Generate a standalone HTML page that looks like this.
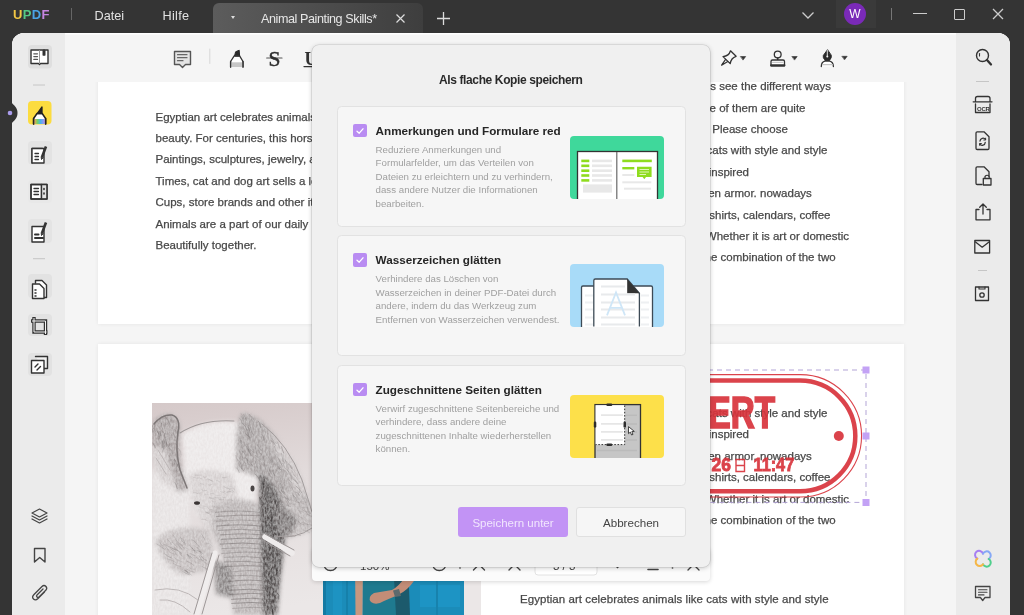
<!DOCTYPE html>
<html><head><meta charset="utf-8">
<style>
*{margin:0;padding:0;box-sizing:border-box}
html,body{width:1024px;height:615px;overflow:hidden;background:#343434;font-family:"Liberation Sans",sans-serif}
body{will-change:transform}
.a{position:absolute}
svg{position:absolute;overflow:visible}
#main{position:absolute;left:12px;top:33px;width:998px;height:582px;background:#f5f5f5;border-radius:12px 12px 0 0;overflow:hidden;box-shadow:inset 0 1.5px 0 #fff}
#lsb{position:absolute;left:0;top:0;width:53px;height:582px;background:#ebebeb}
#rsb{position:absolute;left:944px;top:0;width:54px;height:582px;background:#ebebeb}
#view{position:absolute;left:53px;top:49px;width:891px;height:533px;overflow:hidden}
.page{position:absolute;background:#fff;box-shadow:0 0 4px rgba(0,0,0,.07)}
.doc{position:absolute;font-size:11.5px;color:#484848;-webkit-text-stroke:.25px #484848;white-space:nowrap;line-height:14px}
.sbg{position:absolute;left:16px;width:24px;height:24px;border-radius:4px;background:#e0e0e0}
.sep{position:absolute;height:1px;background:#c8c8c8}
#dlg{position:absolute;left:312px;top:45px;width:398px;height:522px;background:#f0f0f0;border-radius:7px;box-shadow:0 0 0 .6px rgba(0,0,0,.12),0 1px 5px rgba(0,0,0,.22)}
.card{position:absolute;left:24.6px;width:349.8px;height:121px;background:#f6f6f6;border:1px solid #e2e2e2;border-radius:4.5px}
.cb{position:absolute;left:15px;width:14px;height:13.5px;background:#b98cf2;border-radius:2px}
.ct{position:absolute;left:38px;font-weight:bold;font-size:11.7px;line-height:14px;color:#262626;white-space:nowrap}
.cd{position:absolute;left:38px;font-size:9.7px;line-height:13.6px;color:#a0a0a0;white-space:nowrap}
.ill{position:absolute;left:232px;width:94px;height:63px;border-radius:4px;overflow:hidden}
</style></head><body>
<!-- ============ TITLE BAR ============ -->
<div class="a" style="left:13px;top:8px;font-size:13px;font-weight:bold;line-height:13px;letter-spacing:.3px">
<span style="color:#f2c744">U</span><span style="color:#55c785">P</span><span style="color:#4aa3e6">D</span><span style="color:#c584e0">F</span></div>
<div class="a" style="left:71px;top:8px;width:1px;height:12px;background:#666"></div>
<div class="a" style="left:94.5px;top:9px;font-size:12.7px;color:#e2e2e2;line-height:14px">Datei</div>
<div class="a" style="left:162.5px;top:9px;font-size:12.7px;color:#e2e2e2;line-height:14px;letter-spacing:.3px">Hilfe</div>
<div class="a" style="left:213px;top:3px;width:210px;height:30px;border-radius:6px 6px 0 0;background:linear-gradient(90deg,#5c5c5c,#3e3e3e)"></div>
<div class="a" style="left:231px;top:16px;width:0;height:0;border-left:2.5px solid transparent;border-right:2.5px solid transparent;border-top:3px solid #ddd"></div>
<div class="a" style="left:261px;top:12px;font-size:12.6px;color:#e6e6e6;line-height:14px;letter-spacing:-.42px">Animal Painting Skills*</div>
<svg style="left:396px;top:14px" width="9" height="9"><path d="M.5 .5L8.5 8.5M8.5 .5L.5 8.5" stroke="#ddd" stroke-width="1.2"/></svg>
<svg style="left:437px;top:12px" width="13" height="13"><path d="M6.5 0V13M0 6.5H13" stroke="#ddd" stroke-width="1.3"/></svg>
<!-- right controls -->
<svg style="left:802px;top:12px" width="12" height="7"><path d="M.5 .5L6 6L11.5 .5" fill="none" stroke="#ccc" stroke-width="1.3"/></svg>
<div class="a" style="left:836px;top:0;width:40px;height:28px;background:#3a3a3a"></div>
<div class="a" style="left:844px;top:3px;width:22px;height:22px;border-radius:50%;background:#7a2ab8;color:#fff;font-size:12px;line-height:22px;text-align:center">W</div>
<div class="a" style="left:891px;top:8px;width:1px;height:12px;background:#777"></div>
<div class="a" style="left:913px;top:13px;width:14px;height:1.3px;background:#ccc"></div>
<div class="a" style="left:954px;top:9px;width:11px;height:11px;border:1.3px solid #ccc;border-radius:1px"></div>
<svg style="left:993px;top:9px" width="10" height="10"><path d="M0 0L10 10M10 0L0 10" stroke="#ccc" stroke-width="1.3"/></svg>

<!-- ============ MAIN ============ -->
<div id="main">
  <div id="view">
    <!-- page 1 -->
    <div class="page" style="left:33px;top:-60px;width:806px;height:302px"></div>
    <!-- page 2 -->
    <div class="page" style="left:33px;top:262px;width:806px;height:400px"></div>
  </div>
  <div id="lsb"></div>
  <div id="rsb"></div>
</div>

<!-- ============ DOC LAYER ============ -->
<div id="docl" class="a" style="left:0;top:0;width:1024px;height:615px;clip-path:inset(82px 120px 0 65px)">
<div class="doc" style="left:155.5px;top:109.6px">Egyptian art celebrates animals like cats</div>
<div class="doc" style="left:155.5px;top:131.0px">beauty. For centuries, this horse and</div>
<div class="doc" style="left:155.5px;top:152.4px">Paintings, sculptures, jewelry, and more</div>
<div class="doc" style="left:155.5px;top:173.8px">Times, cat and dog art sells a lot of</div>
<div class="doc" style="left:155.5px;top:195.2px">Cups, store brands and other items</div>
<div class="doc" style="left:155.5px;top:216.6px">Animals are a part of our daily lives</div>
<div class="doc" style="left:155.5px;top:238.0px">Beautifully together.</div>
<div class="doc" style="left:430.9px;top:79.2px;width:400px;text-align:right">Let us see the different ways</div>
<div class="doc" style="left:405.5px;top:100.6px;width:400px;text-align:right">Some of them are quite</div>
<div class="doc" style="left:387.8px;top:122.0px;width:400px;text-align:right">animals. Please choose</div>
<div class="doc" style="left:427.4px;top:143.4px;width:400px;text-align:right">like cats with style and style</div>
<div class="doc" style="left:349.0px;top:164.8px;width:400px;text-align:right">inspired</div>
<div class="doc" style="left:411.8px;top:186.2px;width:400px;text-align:right">golden armor. nowadays</div>
<div class="doc" style="left:430.5px;top:207.6px;width:400px;text-align:right">t-shirts, calendars, coffee</div>
<div class="doc" style="left:449.0px;top:229.0px;width:400px;text-align:right">Whether it is art or domestic</div>
<div class="doc" style="left:435.6px;top:250.4px;width:400px;text-align:right">the combination of the two</div>
<div class="doc" style="left:427.4px;top:406.0px;width:400px;text-align:right">like cats with style and style</div>
<div class="doc" style="left:349.0px;top:427.4px;width:400px;text-align:right">inspired</div>
<div class="doc" style="left:411.8px;top:448.8px;width:400px;text-align:right">golden armor. nowadays</div>
<div class="doc" style="left:430.5px;top:470.2px;width:400px;text-align:right">t-shirts, calendars, coffee</div>
<div class="doc" style="left:449.0px;top:491.6px;width:400px;text-align:right">Whether it is art or domestic</div>
<div class="doc" style="left:435.6px;top:513.0px;width:400px;text-align:right">the combination of the two</div>
<div class="doc" style="left:520.0px;top:591.8px;letter-spacing:.06px">Egyptian art celebrates animals like cats with style and style</div>

<svg style="left:0;top:0" width="1024" height="615" viewBox="0 0 1024 615">
 <defs>
  <linearGradient id="elbg" x1="0" y1="0" x2="0.2" y2="1"><stop offset="0" stop-color="#d5c9c9"/><stop offset=".4" stop-color="#e2dbdb"/><stop offset="1" stop-color="#ebe7e7"/></linearGradient>
  <filter id="bl1" x="-20%" y="-20%" width="140%" height="140%"><feGaussianBlur stdDeviation="1.6"/></filter>
  <filter id="bl2" x="-20%" y="-20%" width="140%" height="140%"><feGaussianBlur stdDeviation="3"/></filter>
  <filter id="bl05"><feGaussianBlur stdDeviation=".6"/></filter>
  <filter id="tex" filterUnits="userSpaceOnUse" x="152" y="403" width="170" height="212"><feGaussianBlur in="SourceGraphic" stdDeviation="2.2" result="b"/><feTurbulence type="fractalNoise" baseFrequency="0.55 0.3" numOctaves="2" seed="7" result="n"/><feColorMatrix in="n" type="matrix" values="0 0 0 0 0  0 0 0 0 0  0 0 0 0 0  0 0 0 2.2 -0.6" result="m"/><feComposite in="b" in2="m" operator="arithmetic" k1="0" k2="1" k3="0" k4="0" result="b2"/><feFlood flood-color="#fff" result="w"/><feComposite in="w" in2="m" operator="in" result="wm"/><feComposite in="wm" in2="b" operator="in" result="wm2"/><feComponentTransfer in="wm2" result="wm3"><feFuncA type="linear" slope=".28"/></feComponentTransfer><feMerge><feMergeNode in="b"/><feMergeNode in="wm3"/></feMerge></filter>
  <clipPath id="elc"><rect x="152" y="403" width="329" height="212"/></clipPath>
  <clipPath id="phc"><rect x="323" y="560" width="141" height="55"/></clipPath>
 </defs>
 <!-- elephant picture -->
 <g clip-path="url(#elc)">
  <rect x="152" y="403" width="329" height="212" fill="url(#elbg)"/>
  <g filter="url(#tex)">
   <!-- lower-left light bg -->
   <path d="M152 470H190V615H152Z" fill="#e6e2e2"/>
   <!-- forehead -->
   <path d="M182 434Q205 419 236 422Q256 432 258 470L252 515L222 535L196 515L186 480Z" fill="#ebe7e7"/>
   <!-- ear curl -->
   <path d="M152 424Q158 414 170 414Q181 418 180 432Q178 450 182 470L188 490L178 492Q170 470 166 452Q160 446 152 446Z" fill="#aaa3a3"/>
   <path d="M152 446Q160 448 166 452Q170 470 176 490L160 480Q154 465 152 455Z" fill="#d3cdcd"/>
   <!-- hair tufts -->
   <path d="M236 446Q236 424 242 413Q252 414 260 420Q274 432 284 450Q294 468 300 492L296 505L280 508Q268 486 258 478Q246 472 236 470Z" fill="#aaa4a4"/>
   <path d="M265 432Q284 444 296 466Q308 490 312 512L300 512Q292 485 280 462Z" fill="#cbc5c5"/>
   <!-- face texture -->
   <path d="M188 474Q208 466 232 474Q242 496 236 524L208 532Q192 510 188 474Z" fill="#d6d0d0"/>
   <!-- right ear lower -->
   <path d="M274 492Q294 486 308 500Q314 516 312 530L288 538L272 526Z" fill="#bdb7b7"/>
   <!-- jaw fur -->
   <path d="M155 540Q175 522 208 530Q216 548 212 570L182 575Q162 566 155 540Z" fill="#c4bebe"/>
   <!-- trunk -->
   <path d="M212 505Q246 492 262 508L268 560L275 615H234L226 566L212 530Z" fill="#b9b3b3"/>
   <!-- dark strip -->
   <path d="M259 474Q272 478 282 502L285 540L280 580L277 615H263L261 560Z" fill="#555050"/>
   <path d="M272 500Q285 505 298 520L290 536L276 530Z" fill="#7a7575"/>
   <path d="M214 560L231 566L234 598L216 594Z" fill="#8a8585"/>
  </g>
  <g fill="none" stroke-linecap="round">
<path d="M264.2 463.0Q265.0 466.2 265.7 469.3" stroke="#6f6969" stroke-opacity="0.43" stroke-width="0.7"/>
<path d="M246.1 458.0Q246.6 462.8 249.5 465.3" stroke="#6f6969" stroke-opacity="0.35" stroke-width="0.7"/>
<path d="M276.4 469.9Q277.9 471.4 279.3 473.0" stroke="#6f6969" stroke-opacity="0.29" stroke-width="0.7"/>
<path d="M245.7 433.9Q248.0 436.2 250.6 438.1" stroke="#6f6969" stroke-opacity="0.50" stroke-width="0.7"/>
<path d="M267.4 470.6Q269.1 474.0 271.1 477.1" stroke="#6f6969" stroke-opacity="0.35" stroke-width="0.7"/>
<path d="M288.2 478.1Q289.1 480.9 291.4 482.4" stroke="#6f6969" stroke-opacity="0.29" stroke-width="0.7"/>
<path d="M295.3 491.8Q298.5 492.3 299.3 495.2" stroke="#6f6969" stroke-opacity="0.40" stroke-width="0.7"/>
<path d="M240.8 440.7Q240.4 445.7 242.4 448.5" stroke="#6f6969" stroke-opacity="0.34" stroke-width="0.7"/>
<path d="M241.7 416.3Q242.6 418.5 243.3 421.1" stroke="#6f6969" stroke-opacity="0.39" stroke-width="0.7"/>
<path d="M241.6 450.9Q244.9 451.6 245.3 455.0" stroke="#6f6969" stroke-opacity="0.49" stroke-width="0.7"/>
<path d="M248.5 446.9Q248.3 451.7 250.5 454.0" stroke="#6f6969" stroke-opacity="0.54" stroke-width="0.7"/>
<path d="M248.7 434.8Q249.0 438.1 250.6 440.3" stroke="#6f6969" stroke-opacity="0.29" stroke-width="0.7"/>
<path d="M239.5 465.6Q241.4 468.7 244.1 471.1" stroke="#6f6969" stroke-opacity="0.39" stroke-width="0.7"/>
<path d="M271.1 493.5Q274.0 494.1 274.5 497.1" stroke="#6f6969" stroke-opacity="0.49" stroke-width="0.7"/>
<path d="M250.4 426.9Q251.1 431.9 253.5 435.2" stroke="#6f6969" stroke-opacity="0.53" stroke-width="0.7"/>
<path d="M271.5 438.0Q272.9 442.2 276.8 443.7" stroke="#6f6969" stroke-opacity="0.33" stroke-width="0.7"/>
<path d="M270.6 491.5Q273.1 492.7 273.0 496.5" stroke="#6f6969" stroke-opacity="0.33" stroke-width="0.7"/>
<path d="M246.2 445.9Q246.9 448.4 248.4 450.2" stroke="#6f6969" stroke-opacity="0.51" stroke-width="0.7"/>
<path d="M278.7 467.0Q278.8 470.0 281.8 470.1" stroke="#6f6969" stroke-opacity="0.52" stroke-width="0.7"/>
<path d="M278.1 502.1Q280.8 504.5 283.6 506.9" stroke="#6f6969" stroke-opacity="0.47" stroke-width="0.7"/>
<path d="M239.3 460.8Q241.5 464.2 242.3 468.9" stroke="#6f6969" stroke-opacity="0.46" stroke-width="0.7"/>
<path d="M284.6 496.9Q288.0 498.7 289.0 503.0" stroke="#6f6969" stroke-opacity="0.51" stroke-width="0.7"/>
<path d="M274.4 446.1Q274.7 450.6 277.6 452.5" stroke="#6f6969" stroke-opacity="0.44" stroke-width="0.7"/>
<path d="M281.4 446.6Q282.4 450.1 283.8 453.2" stroke="#6f6969" stroke-opacity="0.50" stroke-width="0.7"/>
<path d="M236.5 467.8Q238.5 469.5 239.3 472.4" stroke="#6f6969" stroke-opacity="0.40" stroke-width="0.7"/>
<path d="M274.0 498.8Q274.7 501.0 276.7 502.1" stroke="#6f6969" stroke-opacity="0.45" stroke-width="0.7"/>
<path d="M248.1 425.5Q248.8 429.3 249.8 432.7" stroke="#6f6969" stroke-opacity="0.51" stroke-width="0.7"/>
<path d="M254.8 473.9Q257.8 475.3 259.0 478.6" stroke="#6f6969" stroke-opacity="0.52" stroke-width="0.7"/>
<path d="M271.0 440.7Q274.3 442.1 275.6 445.4" stroke="#6f6969" stroke-opacity="0.50" stroke-width="0.7"/>
<path d="M279.9 501.3Q281.4 503.4 283.1 505.2" stroke="#6f6969" stroke-opacity="0.34" stroke-width="0.7"/>
<path d="M248.3 449.3Q249.1 452.9 251.1 455.3" stroke="#6f6969" stroke-opacity="0.50" stroke-width="0.7"/>
<path d="M278.9 464.0Q279.9 468.6 283.8 470.4" stroke="#6f6969" stroke-opacity="0.31" stroke-width="0.7"/>
<path d="M243.7 414.6Q245.4 417.1 246.4 420.4" stroke="#6f6969" stroke-opacity="0.45" stroke-width="0.7"/>
<path d="M286.7 501.7Q287.6 504.1 288.7 506.4" stroke="#6f6969" stroke-opacity="0.32" stroke-width="0.7"/>
<path d="M235.8 455.5Q236.0 458.5 237.6 460.2" stroke="#6f6969" stroke-opacity="0.36" stroke-width="0.7"/>
<path d="M278.9 458.9Q280.3 462.8 282.3 466.0" stroke="#6f6969" stroke-opacity="0.48" stroke-width="0.7"/>
<path d="M293.4 479.3Q296.1 481.2 297.9 483.9" stroke="#6f6969" stroke-opacity="0.52" stroke-width="0.7"/>
<path d="M259.1 463.1Q261.4 465.7 261.2 471.0" stroke="#6f6969" stroke-opacity="0.40" stroke-width="0.7"/>
<path d="M280.6 487.2Q281.3 491.6 283.8 494.3" stroke="#6f6969" stroke-opacity="0.51" stroke-width="0.7"/>
<path d="M267.7 484.7Q271.4 487.1 273.0 491.6" stroke="#6f6969" stroke-opacity="0.36" stroke-width="0.7"/>
<path d="M239.4 451.4Q241.3 454.9 243.2 458.4" stroke="#6f6969" stroke-opacity="0.28" stroke-width="0.7"/>
<path d="M243.1 423.7Q246.0 426.1 246.9 430.5" stroke="#6f6969" stroke-opacity="0.46" stroke-width="0.7"/>
<path d="M247.8 460.0Q250.6 462.6 252.6 466.1" stroke="#6f6969" stroke-opacity="0.41" stroke-width="0.7"/>
<path d="M288.1 463.8Q291.0 465.2 291.8 468.6" stroke="#6f6969" stroke-opacity="0.51" stroke-width="0.7"/>
<path d="M269.4 458.8Q271.7 459.4 271.2 462.8" stroke="#6f6969" stroke-opacity="0.41" stroke-width="0.7"/>
<path d="M271.2 457.6Q272.1 459.5 272.9 461.7" stroke="#6f6969" stroke-opacity="0.38" stroke-width="0.7"/>
<path d="M295.2 498.2Q296.1 501.8 299.3 503.2" stroke="#6f6969" stroke-opacity="0.39" stroke-width="0.7"/>
<path d="M286.7 496.1Q287.3 499.5 289.7 501.0" stroke="#6f6969" stroke-opacity="0.44" stroke-width="0.7"/>
<path d="M247.3 431.9Q248.0 435.0 249.5 437.3" stroke="#6f6969" stroke-opacity="0.44" stroke-width="0.7"/>
<path d="M242.2 459.5Q243.9 461.4 245.5 463.5" stroke="#6f6969" stroke-opacity="0.39" stroke-width="0.7"/>
<path d="M258.8 450.1Q259.2 453.2 261.2 454.5" stroke="#6f6969" stroke-opacity="0.44" stroke-width="0.7"/>
<path d="M275.9 459.9Q277.9 462.2 277.9 466.8" stroke="#6f6969" stroke-opacity="0.33" stroke-width="0.7"/>
<path d="M282.7 487.2Q282.9 490.6 284.1 492.8" stroke="#6f6969" stroke-opacity="0.52" stroke-width="0.7"/>
<path d="M251.7 419.2Q253.5 421.3 253.5 425.2" stroke="#6f6969" stroke-opacity="0.30" stroke-width="0.7"/>
<path d="M259.8 476.4Q262.3 477.5 263.7 479.8" stroke="#6f6969" stroke-opacity="0.52" stroke-width="0.7"/>
<path d="M266.5 481.7Q267.4 486.0 270.2 488.3" stroke="#6f6969" stroke-opacity="0.29" stroke-width="0.7"/>
<path d="M241.2 413.6Q243.0 416.4 244.4 419.5" stroke="#6f6969" stroke-opacity="0.31" stroke-width="0.7"/>
<path d="M246.5 428.0Q249.1 431.1 249.1 436.7" stroke="#6f6969" stroke-opacity="0.30" stroke-width="0.7"/>
<path d="M263.6 483.1Q265.6 485.6 267.5 488.2" stroke="#6f6969" stroke-opacity="0.39" stroke-width="0.7"/>
<path d="M278.7 490.8Q281.6 492.5 283.0 495.6" stroke="#6f6969" stroke-opacity="0.38" stroke-width="0.7"/>
<path d="M247.4 426.8Q249.7 427.5 249.5 430.5" stroke="#6f6969" stroke-opacity="0.49" stroke-width="0.7"/>
<path d="M279.8 492.0Q281.4 494.5 282.4 497.6" stroke="#6f6969" stroke-opacity="0.41" stroke-width="0.7"/>
<path d="M296.1 486.1Q299.6 488.7 301.7 492.8" stroke="#6f6969" stroke-opacity="0.48" stroke-width="0.7"/>
<path d="M291.9 492.9Q294.2 495.8 294.9 500.3" stroke="#6f6969" stroke-opacity="0.38" stroke-width="0.7"/>
<path d="M255.6 455.6Q258.3 457.1 260.1 459.5" stroke="#6f6969" stroke-opacity="0.44" stroke-width="0.7"/>
<path d="M277.2 441.9Q278.7 445.0 280.0 448.3" stroke="#6f6969" stroke-opacity="0.38" stroke-width="0.7"/>
<path d="M280.5 483.2Q281.2 485.0 281.3 487.5" stroke="#6f6969" stroke-opacity="0.47" stroke-width="0.7"/>
<path d="M250.5 449.4Q252.1 451.5 254.3 452.9" stroke="#6f6969" stroke-opacity="0.30" stroke-width="0.7"/>
<path d="M270.5 457.8Q272.7 459.8 271.9 464.7" stroke="#6f6969" stroke-opacity="0.44" stroke-width="0.7"/>
<path d="M271.0 482.2Q273.2 486.1 277.5 488.0" stroke="#6f6969" stroke-opacity="0.40" stroke-width="0.7"/>
<path d="M245.9 458.1Q248.2 458.7 247.8 462.1" stroke="#6f6969" stroke-opacity="0.38" stroke-width="0.7"/>
<path d="M268.1 467.5Q270.2 469.3 271.3 472.1" stroke="#6f6969" stroke-opacity="0.42" stroke-width="0.7"/>
<path d="M249.0 414.2Q251.4 417.4 254.4 419.9" stroke="#6f6969" stroke-opacity="0.51" stroke-width="0.7"/>
<path d="M263.0 455.7Q263.6 458.3 264.0 461.0" stroke="#6f6969" stroke-opacity="0.52" stroke-width="0.7"/>
<path d="M281.5 453.5Q282.6 457.2 283.0 461.5" stroke="#6f6969" stroke-opacity="0.30" stroke-width="0.7"/>
<path d="M274.5 454.6Q276.0 456.2 277.4 457.9" stroke="#6f6969" stroke-opacity="0.30" stroke-width="0.7"/>
<path d="M262.9 474.1Q264.6 476.2 265.8 478.8" stroke="#6f6969" stroke-opacity="0.38" stroke-width="0.7"/>
<path d="M285.0 459.1Q286.5 462.7 286.6 467.8" stroke="#6f6969" stroke-opacity="0.33" stroke-width="0.7"/>
<path d="M284.6 470.1Q286.8 471.8 287.8 474.6" stroke="#6f6969" stroke-opacity="0.42" stroke-width="0.7"/>
<path d="M273.0 470.7Q273.1 473.9 274.7 475.6" stroke="#6f6969" stroke-opacity="0.53" stroke-width="0.7"/>
<path d="M292.9 495.0Q293.9 497.2 296.3 498.0" stroke="#6f6969" stroke-opacity="0.38" stroke-width="0.7"/>
<path d="M269.4 470.3Q270.4 473.8 273.1 475.6" stroke="#6f6969" stroke-opacity="0.36" stroke-width="0.7"/>
<path d="M281.9 491.0Q284.6 491.7 285.4 494.3" stroke="#6f6969" stroke-opacity="0.44" stroke-width="0.7"/>
<path d="M262.3 434.7Q263.6 437.1 264.1 440.4" stroke="#6f6969" stroke-opacity="0.54" stroke-width="0.7"/>
<path d="M255.3 461.0Q256.6 465.3 258.3 469.2" stroke="#6f6969" stroke-opacity="0.37" stroke-width="0.7"/>
<path d="M239.5 418.0Q241.6 420.3 242.5 423.8" stroke="#6f6969" stroke-opacity="0.35" stroke-width="0.7"/>
<path d="M239.9 438.3Q240.6 442.5 242.6 445.4" stroke="#6f6969" stroke-opacity="0.31" stroke-width="0.7"/>
<path d="M258.2 420.9Q260.7 422.9 260.7 427.4" stroke="#6f6969" stroke-opacity="0.52" stroke-width="0.7"/>
<path d="M255.4 446.8Q255.6 451.7 257.3 455.1" stroke="#6f6969" stroke-opacity="0.37" stroke-width="0.7"/>
<path d="M257.7 445.0Q258.5 448.4 261.1 450.0" stroke="#6f6969" stroke-opacity="0.42" stroke-width="0.7"/>
<path d="M290.1 472.7Q291.5 476.5 291.1 482.1" stroke="#8a8484" stroke-opacity="0.26" stroke-width="0.6"/>
<path d="M267.5 433.2Q267.7 439.8 270.4 443.9" stroke="#8a8484" stroke-opacity="0.39" stroke-width="0.6"/>
<path d="M283.0 454.2Q283.5 459.0 284.1 463.8" stroke="#8a8484" stroke-opacity="0.37" stroke-width="0.6"/>
<path d="M298.3 484.7Q299.9 487.7 299.5 492.6" stroke="#8a8484" stroke-opacity="0.40" stroke-width="0.6"/>
<path d="M304.0 491.1Q306.5 495.1 306.2 501.9" stroke="#8a8484" stroke-opacity="0.39" stroke-width="0.6"/>
<path d="M298.2 508.5Q299.0 512.2 301.5 514.1" stroke="#8a8484" stroke-opacity="0.34" stroke-width="0.6"/>
<path d="M286.5 468.4Q290.3 472.8 293.1 478.1" stroke="#8a8484" stroke-opacity="0.30" stroke-width="0.6"/>
<path d="M296.5 478.0Q298.0 481.0 300.5 483.0" stroke="#8a8484" stroke-opacity="0.30" stroke-width="0.6"/>
<path d="M302.4 495.1Q305.4 497.1 307.1 500.4" stroke="#8a8484" stroke-opacity="0.26" stroke-width="0.6"/>
<path d="M287.0 465.0Q288.6 468.4 288.1 474.0" stroke="#8a8484" stroke-opacity="0.31" stroke-width="0.6"/>
<path d="M287.2 469.9Q290.0 474.6 293.9 478.2" stroke="#8a8484" stroke-opacity="0.31" stroke-width="0.6"/>
<path d="M287.4 464.5Q292.4 467.7 295.6 472.8" stroke="#8a8484" stroke-opacity="0.29" stroke-width="0.6"/>
<path d="M276.7 454.8Q278.3 459.7 281.4 463.2" stroke="#8a8484" stroke-opacity="0.29" stroke-width="0.6"/>
<path d="M270.1 434.9Q270.7 440.5 273.1 444.2" stroke="#8a8484" stroke-opacity="0.34" stroke-width="0.6"/>
<path d="M271.0 439.4Q273.6 440.7 273.8 444.5" stroke="#8a8484" stroke-opacity="0.34" stroke-width="0.6"/>
<path d="M287.7 478.7Q288.7 484.1 290.4 488.9" stroke="#8a8484" stroke-opacity="0.32" stroke-width="0.6"/>
<path d="M293.4 478.0Q295.6 481.2 298.6 483.4" stroke="#8a8484" stroke-opacity="0.40" stroke-width="0.6"/>
<path d="M295.2 494.3Q299.0 498.5 302.0 503.4" stroke="#8a8484" stroke-opacity="0.29" stroke-width="0.6"/>
<path d="M289.1 483.0Q291.7 488.2 295.1 492.5" stroke="#8a8484" stroke-opacity="0.35" stroke-width="0.6"/>
<path d="M289.2 473.6Q291.8 475.6 291.9 480.1" stroke="#8a8484" stroke-opacity="0.48" stroke-width="0.6"/>
<path d="M294.3 487.1Q297.5 490.1 298.8 495.0" stroke="#8a8484" stroke-opacity="0.24" stroke-width="0.6"/>
<path d="M285.4 460.3Q287.9 464.1 288.8 469.5" stroke="#8a8484" stroke-opacity="0.42" stroke-width="0.6"/>
<path d="M302.4 496.8Q304.6 500.2 306.3 504.0" stroke="#8a8484" stroke-opacity="0.46" stroke-width="0.6"/>
<path d="M287.1 469.1Q289.2 474.5 292.3 478.9" stroke="#8a8484" stroke-opacity="0.25" stroke-width="0.6"/>
<path d="M297.9 499.6Q299.9 503.3 300.3 508.4" stroke="#8a8484" stroke-opacity="0.31" stroke-width="0.6"/>
<path d="M285.3 460.2Q288.7 463.7 292.0 467.3" stroke="#8a8484" stroke-opacity="0.30" stroke-width="0.6"/>
<path d="M306.1 504.2Q307.6 509.6 309.5 514.5" stroke="#8a8484" stroke-opacity="0.43" stroke-width="0.6"/>
<path d="M282.6 457.9Q282.3 461.9 284.7 463.2" stroke="#8a8484" stroke-opacity="0.46" stroke-width="0.6"/>
<path d="M307.4 507.2Q308.3 510.8 310.4 513.2" stroke="#8a8484" stroke-opacity="0.46" stroke-width="0.6"/>
<path d="M303.5 507.9Q305.4 512.6 309.2 515.4" stroke="#8a8484" stroke-opacity="0.45" stroke-width="0.6"/>
<path d="M306.4 498.6Q307.9 501.0 308.2 504.6" stroke="#8a8484" stroke-opacity="0.47" stroke-width="0.6"/>
<path d="M293.8 491.1Q297.4 494.1 298.6 499.4" stroke="#8a8484" stroke-opacity="0.38" stroke-width="0.6"/>
<path d="M284.6 471.7Q286.0 474.0 286.8 476.9" stroke="#8a8484" stroke-opacity="0.31" stroke-width="0.6"/>
<path d="M288.7 479.5Q292.0 482.7 293.6 487.7" stroke="#8a8484" stroke-opacity="0.36" stroke-width="0.6"/>
<path d="M296.8 470.4Q298.0 472.8 297.6 476.9" stroke="#8a8484" stroke-opacity="0.28" stroke-width="0.6"/>
<path d="M299.5 491.8Q301.1 496.1 304.4 498.7" stroke="#8a8484" stroke-opacity="0.38" stroke-width="0.6"/>
<path d="M291.0 484.1Q292.1 490.1 295.1 494.2" stroke="#8a8484" stroke-opacity="0.28" stroke-width="0.6"/>
<path d="M282.5 463.0Q284.1 468.6 288.4 471.6" stroke="#8a8484" stroke-opacity="0.46" stroke-width="0.6"/>
<path d="M290.9 472.1Q290.7 476.5 292.5 478.8" stroke="#8a8484" stroke-opacity="0.31" stroke-width="0.6"/>
<path d="M291.6 470.3Q293.0 475.3 296.8 477.8" stroke="#8a8484" stroke-opacity="0.44" stroke-width="0.6"/>
<path d="M156.9 430.9Q159.2 432.9 159.5 436.9" stroke="#6f6969" stroke-opacity="0.48" stroke-width="0.7"/>
<path d="M153.6 443.9Q155.6 444.6 154.8 448.2" stroke="#6f6969" stroke-opacity="0.28" stroke-width="0.7"/>
<path d="M153.6 430.7Q153.1 433.1 153.2 434.9" stroke="#6f6969" stroke-opacity="0.35" stroke-width="0.7"/>
<path d="M165.4 416.5Q168.1 419.2 169.1 423.4" stroke="#6f6969" stroke-opacity="0.47" stroke-width="0.7"/>
<path d="M160.0 431.5Q160.2 433.9 160.6 436.0" stroke="#6f6969" stroke-opacity="0.52" stroke-width="0.7"/>
<path d="M165.6 437.2Q163.7 441.7 164.6 443.3" stroke="#6f6969" stroke-opacity="0.38" stroke-width="0.7"/>
<path d="M158.6 438.4Q158.7 442.1 160.9 443.8" stroke="#6f6969" stroke-opacity="0.32" stroke-width="0.7"/>
<path d="M163.7 445.7Q164.2 447.8 162.6 452.1" stroke="#6f6969" stroke-opacity="0.33" stroke-width="0.7"/>
<path d="M165.7 417.1Q165.1 420.4 165.9 422.2" stroke="#6f6969" stroke-opacity="0.28" stroke-width="0.7"/>
<path d="M157.6 430.8Q159.2 433.8 159.5 438.1" stroke="#6f6969" stroke-opacity="0.34" stroke-width="0.7"/>
<path d="M165.3 423.4Q165.8 425.2 164.7 428.5" stroke="#6f6969" stroke-opacity="0.47" stroke-width="0.7"/>
<path d="M162.0 440.7Q163.1 444.5 165.2 447.2" stroke="#6f6969" stroke-opacity="0.48" stroke-width="0.7"/>
<path d="M170.1 416.1Q169.3 419.7 171.3 420.5" stroke="#6f6969" stroke-opacity="0.31" stroke-width="0.7"/>
<path d="M162.9 445.0Q163.9 446.5 163.5 449.1" stroke="#6f6969" stroke-opacity="0.34" stroke-width="0.7"/>
<path d="M177.2 463.9Q177.5 466.6 179.0 468.0" stroke="#6f6969" stroke-opacity="0.46" stroke-width="0.7"/>
<path d="M166.8 441.9Q166.0 444.8 166.4 446.4" stroke="#6f6969" stroke-opacity="0.36" stroke-width="0.7"/>
<path d="M175.0 482.7Q176.6 485.2 177.3 488.7" stroke="#6f6969" stroke-opacity="0.53" stroke-width="0.7"/>
<path d="M166.2 442.3Q166.9 445.1 168.6 446.9" stroke="#6f6969" stroke-opacity="0.40" stroke-width="0.7"/>
<path d="M161.4 423.7Q161.1 427.4 162.7 429.1" stroke="#6f6969" stroke-opacity="0.45" stroke-width="0.7"/>
<path d="M159.9 418.7Q159.6 422.3 161.4 423.8" stroke="#6f6969" stroke-opacity="0.43" stroke-width="0.7"/>
<path d="M177.2 455.3Q176.9 457.5 177.3 459.0" stroke="#6f6969" stroke-opacity="0.37" stroke-width="0.7"/>
<path d="M152.9 443.0Q154.5 445.3 155.6 448.1" stroke="#6f6969" stroke-opacity="0.40" stroke-width="0.7"/>
<path d="M162.5 431.6Q164.9 432.6 164.9 436.0" stroke="#6f6969" stroke-opacity="0.42" stroke-width="0.7"/>
<path d="M174.0 459.8Q173.9 463.1 175.2 465.0" stroke="#6f6969" stroke-opacity="0.49" stroke-width="0.7"/>
<path d="M163.4 440.0Q162.2 443.0 162.8 444.2" stroke="#6f6969" stroke-opacity="0.33" stroke-width="0.7"/>
<path d="M175.0 429.7Q176.2 432.6 178.0 434.8" stroke="#6f6969" stroke-opacity="0.33" stroke-width="0.7"/>
<path d="M171.3 459.2Q173.1 461.3 172.2 466.2" stroke="#6f6969" stroke-opacity="0.36" stroke-width="0.7"/>
<path d="M177.6 464.1Q176.0 468.6 176.5 471.0" stroke="#6f6969" stroke-opacity="0.44" stroke-width="0.7"/>
<path d="M169.0 455.7Q170.4 457.2 170.3 460.3" stroke="#6f6969" stroke-opacity="0.41" stroke-width="0.7"/>
<path d="M159.9 431.4Q160.6 433.4 161.2 435.5" stroke="#6f6969" stroke-opacity="0.30" stroke-width="0.7"/>
<path d="M178.4 448.2Q180.9 450.4 181.2 454.8" stroke="#6f6969" stroke-opacity="0.28" stroke-width="0.7"/>
<path d="M177.7 431.2Q177.3 434.1 177.8 436.1" stroke="#6f6969" stroke-opacity="0.48" stroke-width="0.7"/>
<path d="M182.0 476.0Q183.0 478.0 182.7 481.3" stroke="#6f6969" stroke-opacity="0.44" stroke-width="0.7"/>
<path d="M180.8 474.1Q182.4 476.0 183.0 478.8" stroke="#6f6969" stroke-opacity="0.33" stroke-width="0.7"/>
<path d="M176.5 444.1Q178.1 445.4 177.0 449.3" stroke="#6f6969" stroke-opacity="0.54" stroke-width="0.7"/>
<path d="M170.9 449.3Q172.4 450.8 172.2 454.0" stroke="#6f6969" stroke-opacity="0.50" stroke-width="0.7"/>
<path d="M161.9 441.2Q163.7 443.1 162.5 447.9" stroke="#6f6969" stroke-opacity="0.38" stroke-width="0.7"/>
<path d="M177.1 454.5Q176.0 457.6 176.9 458.7" stroke="#6f6969" stroke-opacity="0.30" stroke-width="0.7"/>
<path d="M169.0 421.6Q169.8 423.2 170.1 425.1" stroke="#6f6969" stroke-opacity="0.31" stroke-width="0.7"/>
<path d="M173.5 432.7Q174.1 435.8 175.5 438.0" stroke="#6f6969" stroke-opacity="0.34" stroke-width="0.7"/>
<path d="M154.1 424.4Q153.9 429.1 155.5 432.1" stroke="#6f6969" stroke-opacity="0.50" stroke-width="0.7"/>
<path d="M169.5 443.7Q168.1 447.7 169.3 449.0" stroke="#6f6969" stroke-opacity="0.42" stroke-width="0.7"/>
<path d="M174.4 459.0Q176.7 461.5 176.9 466.2" stroke="#6f6969" stroke-opacity="0.54" stroke-width="0.7"/>
<path d="M152.1 425.4Q152.5 427.6 153.8 428.9" stroke="#6f6969" stroke-opacity="0.47" stroke-width="0.7"/>
<path d="M152.6 428.6Q152.5 430.3 152.1 432.2" stroke="#6f6969" stroke-opacity="0.49" stroke-width="0.7"/>
<path d="M179.7 468.0Q181.5 470.4 181.4 474.7" stroke="#6f6969" stroke-opacity="0.48" stroke-width="0.7"/>
<path d="M177.6 431.7Q177.6 433.3 177.2 435.4" stroke="#6f6969" stroke-opacity="0.33" stroke-width="0.7"/>
<path d="M165.8 439.3Q165.6 443.2 166.2 446.3" stroke="#6f6969" stroke-opacity="0.44" stroke-width="0.7"/>
<path d="M165.0 433.3Q163.5 437.0 164.5 438.2" stroke="#6f6969" stroke-opacity="0.36" stroke-width="0.7"/>
<path d="M178.7 427.5Q179.2 429.9 178.7 433.4" stroke="#6f6969" stroke-opacity="0.32" stroke-width="0.7"/>
<path d="M171.8 548.2Q174.7 549.7 178.1 550.5" stroke="#7d7777" stroke-opacity="0.32" stroke-width="0.7"/>
<path d="M181.9 570.8Q185.1 573.4 189.4 574.9" stroke="#7d7777" stroke-opacity="0.42" stroke-width="0.7"/>
<path d="M165.8 546.5Q166.8 549.0 169.2 550.3" stroke="#7d7777" stroke-opacity="0.40" stroke-width="0.7"/>
<path d="M206.4 543.1Q210.5 543.0 211.7 545.9" stroke="#7d7777" stroke-opacity="0.28" stroke-width="0.7"/>
<path d="M189.4 545.1Q191.5 546.7 193.0 548.9" stroke="#7d7777" stroke-opacity="0.45" stroke-width="0.7"/>
<path d="M201.1 556.0Q202.7 559.4 206.5 560.5" stroke="#7d7777" stroke-opacity="0.44" stroke-width="0.7"/>
<path d="M192.2 548.1Q194.0 550.7 196.5 552.7" stroke="#7d7777" stroke-opacity="0.30" stroke-width="0.7"/>
<path d="M187.6 554.4Q189.6 555.4 190.9 557.2" stroke="#7d7777" stroke-opacity="0.35" stroke-width="0.7"/>
<path d="M187.5 554.7Q188.7 556.8 190.2 558.8" stroke="#7d7777" stroke-opacity="0.48" stroke-width="0.7"/>
<path d="M194.1 540.6Q196.8 544.4 200.0 547.5" stroke="#7d7777" stroke-opacity="0.45" stroke-width="0.7"/>
<path d="M180.8 537.6Q184.3 539.2 185.2 543.5" stroke="#7d7777" stroke-opacity="0.44" stroke-width="0.7"/>
<path d="M199.3 551.1Q201.6 551.9 201.6 555.0" stroke="#7d7777" stroke-opacity="0.41" stroke-width="0.7"/>
<path d="M179.4 552.0Q180.2 554.8 182.4 556.2" stroke="#7d7777" stroke-opacity="0.39" stroke-width="0.7"/>
<path d="M196.3 550.1Q200.9 551.0 203.4 554.1" stroke="#7d7777" stroke-opacity="0.42" stroke-width="0.7"/>
<path d="M184.8 568.8Q185.9 571.2 187.8 572.7" stroke="#7d7777" stroke-opacity="0.26" stroke-width="0.7"/>
<path d="M202.0 566.5Q204.0 567.9 206.6 568.6" stroke="#7d7777" stroke-opacity="0.44" stroke-width="0.7"/>
<path d="M186.0 568.8Q189.3 571.5 194.3 572.3" stroke="#7d7777" stroke-opacity="0.39" stroke-width="0.7"/>
<path d="M201.7 561.0Q204.8 563.0 208.3 564.5" stroke="#7d7777" stroke-opacity="0.24" stroke-width="0.7"/>
<path d="M172.4 542.2Q174.7 543.9 176.3 546.2" stroke="#7d7777" stroke-opacity="0.41" stroke-width="0.7"/>
<path d="M192.4 550.0Q195.9 549.7 196.7 552.0" stroke="#7d7777" stroke-opacity="0.39" stroke-width="0.7"/>
<path d="M173.5 535.5Q176.1 538.1 177.3 542.1" stroke="#7d7777" stroke-opacity="0.33" stroke-width="0.7"/>
<path d="M169.4 546.8Q172.5 548.6 176.0 550.0" stroke="#7d7777" stroke-opacity="0.44" stroke-width="0.7"/>
<path d="M174.9 547.7Q177.9 551.0 181.7 553.4" stroke="#7d7777" stroke-opacity="0.41" stroke-width="0.7"/>
<path d="M164.8 553.9Q167.8 556.7 172.0 558.3" stroke="#7d7777" stroke-opacity="0.45" stroke-width="0.7"/>
<path d="M191.9 547.9Q194.3 549.7 195.2 553.0" stroke="#7d7777" stroke-opacity="0.38" stroke-width="0.7"/>
<path d="M175.4 539.9Q178.3 543.3 182.4 545.4" stroke="#7d7777" stroke-opacity="0.41" stroke-width="0.7"/>
<path d="M191.4 539.6Q194.5 539.8 195.3 542.5" stroke="#7d7777" stroke-opacity="0.30" stroke-width="0.7"/>
<path d="M176.4 542.0Q179.2 545.1 181.5 548.7" stroke="#7d7777" stroke-opacity="0.37" stroke-width="0.7"/>
<path d="M156.9 544.1Q160.5 545.9 163.2 548.6" stroke="#7d7777" stroke-opacity="0.32" stroke-width="0.7"/>
<path d="M179.5 544.5Q182.3 545.8 184.0 548.1" stroke="#7d7777" stroke-opacity="0.39" stroke-width="0.7"/>
<path d="M199.2 555.9Q200.9 560.5 205.3 562.6" stroke="#7d7777" stroke-opacity="0.35" stroke-width="0.7"/>
<path d="M173.9 557.3Q177.0 560.4 181.8 561.7" stroke="#7d7777" stroke-opacity="0.33" stroke-width="0.7"/>
<path d="M161.7 546.0Q162.1 548.8 164.6 549.5" stroke="#7d7777" stroke-opacity="0.40" stroke-width="0.7"/>
<path d="M187.0 561.3Q191.2 562.7 194.0 565.4" stroke="#7d7777" stroke-opacity="0.43" stroke-width="0.7"/>
<path d="M206.1 569.3Q208.9 570.2 211.6 571.4" stroke="#7d7777" stroke-opacity="0.37" stroke-width="0.7"/>
<path d="M169.0 551.4Q171.1 553.9 175.4 554.3" stroke="#7d7777" stroke-opacity="0.26" stroke-width="0.7"/>
<path d="M182.5 541.1Q183.9 543.5 185.9 545.3" stroke="#7d7777" stroke-opacity="0.25" stroke-width="0.7"/>
<path d="M165.0 548.2Q168.5 549.3 169.8 552.5" stroke="#7d7777" stroke-opacity="0.27" stroke-width="0.7"/>
<path d="M201.7 534.1Q203.2 537.2 205.2 539.9" stroke="#7d7777" stroke-opacity="0.39" stroke-width="0.7"/>
<path d="M193.8 560.6Q195.4 563.5 199.9 563.6" stroke="#7d7777" stroke-opacity="0.27" stroke-width="0.7"/>
<path d="M188.8 567.0Q190.4 569.4 194.5 569.3" stroke="#7d7777" stroke-opacity="0.30" stroke-width="0.7"/>
<path d="M170.8 548.9Q175.1 550.7 176.7 555.1" stroke="#7d7777" stroke-opacity="0.38" stroke-width="0.7"/>
<path d="M181.3 569.0Q184.3 570.0 185.9 572.3" stroke="#7d7777" stroke-opacity="0.30" stroke-width="0.7"/>
<path d="M173.7 547.4Q175.8 549.5 178.3 551.2" stroke="#7d7777" stroke-opacity="0.35" stroke-width="0.7"/>
<path d="M184.2 546.9Q185.8 548.4 188.3 549.1" stroke="#7d7777" stroke-opacity="0.32" stroke-width="0.7"/>
<path d="M180.5 537.8Q181.1 541.8 184.7 542.9" stroke="#7d7777" stroke-opacity="0.34" stroke-width="0.7"/>
<path d="M185.9 571.2Q188.4 573.6 191.8 575.3" stroke="#7d7777" stroke-opacity="0.31" stroke-width="0.7"/>
<path d="M186.9 554.7Q189.8 556.5 192.5 558.3" stroke="#7d7777" stroke-opacity="0.42" stroke-width="0.7"/>
<path d="M167.4 539.7Q170.4 541.1 171.3 544.6" stroke="#7d7777" stroke-opacity="0.34" stroke-width="0.7"/>
<path d="M167.1 558.8Q172.3 559.6 175.4 562.4" stroke="#7d7777" stroke-opacity="0.32" stroke-width="0.7"/>
<path d="M196.3 557.4Q198.6 560.3 203.6 560.4" stroke="#7d7777" stroke-opacity="0.39" stroke-width="0.7"/>
<path d="M185.0 570.2Q187.8 570.4 188.0 573.3" stroke="#7d7777" stroke-opacity="0.42" stroke-width="0.7"/>
<path d="M193.9 545.5Q198.3 547.6 200.1 552.1" stroke="#7d7777" stroke-opacity="0.26" stroke-width="0.7"/>
<path d="M197.6 547.5Q199.4 550.0 201.5 552.1" stroke="#7d7777" stroke-opacity="0.34" stroke-width="0.7"/>
<path d="M160.2 542.7Q160.6 545.5 163.2 546.1" stroke="#7d7777" stroke-opacity="0.44" stroke-width="0.7"/>
<path d="M190.8 553.7Q192.4 555.2 195.2 555.7" stroke="#7d7777" stroke-opacity="0.47" stroke-width="0.7"/>
<path d="M184.2 570.0Q187.0 571.4 189.7 573.0" stroke="#7d7777" stroke-opacity="0.44" stroke-width="0.7"/>
<path d="M176.6 543.8Q179.6 547.0 182.6 550.2" stroke="#7d7777" stroke-opacity="0.41" stroke-width="0.7"/>
<path d="M173.5 563.4Q176.1 566.0 180.7 566.6" stroke="#7d7777" stroke-opacity="0.38" stroke-width="0.7"/>
<path d="M163.9 544.3Q166.8 545.3 169.2 546.9" stroke="#7d7777" stroke-opacity="0.36" stroke-width="0.7"/>
<path d="M285.1 516.8Q287.8 518.2 290.0 520.1" stroke="#7d7777" stroke-opacity="0.36" stroke-width="0.6"/>
<path d="M296.1 502.0Q300.1 502.5 303.7 503.5" stroke="#7d7777" stroke-opacity="0.30" stroke-width="0.6"/>
<path d="M283.7 523.9Q287.3 524.8 290.6 526.0" stroke="#7d7777" stroke-opacity="0.47" stroke-width="0.6"/>
<path d="M305.9 512.1Q309.1 512.2 310.9 513.9" stroke="#7d7777" stroke-opacity="0.26" stroke-width="0.6"/>
<path d="M280.5 530.9Q284.5 530.8 288.1 531.1" stroke="#7d7777" stroke-opacity="0.37" stroke-width="0.6"/>
<path d="M282.2 496.5Q286.2 498.1 288.5 501.4" stroke="#7d7777" stroke-opacity="0.26" stroke-width="0.6"/>
<path d="M300.0 501.6Q303.7 501.7 306.7 502.5" stroke="#7d7777" stroke-opacity="0.27" stroke-width="0.6"/>
<path d="M299.1 516.2Q303.2 518.2 306.1 521.4" stroke="#7d7777" stroke-opacity="0.33" stroke-width="0.6"/>
<path d="M305.9 524.2Q310.7 524.4 314.2 525.9" stroke="#7d7777" stroke-opacity="0.30" stroke-width="0.6"/>
<path d="M290.8 503.1Q292.4 504.8 296.2 504.2" stroke="#7d7777" stroke-opacity="0.36" stroke-width="0.6"/>
<path d="M279.6 504.5Q284.0 504.0 286.2 505.8" stroke="#7d7777" stroke-opacity="0.28" stroke-width="0.6"/>
<path d="M303.3 529.9Q307.1 530.6 309.5 532.7" stroke="#7d7777" stroke-opacity="0.37" stroke-width="0.6"/>
<path d="M296.1 532.9Q297.1 535.6 300.7 535.7" stroke="#7d7777" stroke-opacity="0.46" stroke-width="0.6"/>
<path d="M283.3 527.7Q286.1 528.6 289.7 528.7" stroke="#7d7777" stroke-opacity="0.42" stroke-width="0.6"/>
<path d="M307.0 514.1Q308.9 516.1 312.5 516.4" stroke="#7d7777" stroke-opacity="0.47" stroke-width="0.6"/>
<path d="M292.4 495.7Q295.7 496.4 296.8 499.3" stroke="#7d7777" stroke-opacity="0.25" stroke-width="0.6"/>
<path d="M270.3 515.9Q274.3 517.2 276.1 520.7" stroke="#7d7777" stroke-opacity="0.43" stroke-width="0.6"/>
<path d="M290.3 499.4Q293.1 500.5 295.8 501.6" stroke="#7d7777" stroke-opacity="0.29" stroke-width="0.6"/>
<path d="M298.0 510.4Q300.2 511.2 302.4 512.0" stroke="#7d7777" stroke-opacity="0.37" stroke-width="0.6"/>
<path d="M273.7 504.9Q278.7 504.5 281.1 506.7" stroke="#7d7777" stroke-opacity="0.47" stroke-width="0.6"/>
<path d="M269.3 513.0Q273.1 514.2 276.3 516.0" stroke="#7d7777" stroke-opacity="0.39" stroke-width="0.6"/>
<path d="M290.4 536.1Q293.9 535.0 295.1 536.2" stroke="#7d7777" stroke-opacity="0.47" stroke-width="0.6"/>
<path d="M301.9 522.4Q306.0 522.9 308.5 524.9" stroke="#7d7777" stroke-opacity="0.43" stroke-width="0.6"/>
<path d="M302.5 510.1Q303.9 512.2 308.2 511.4" stroke="#7d7777" stroke-opacity="0.42" stroke-width="0.6"/>
<path d="M279.8 517.9Q283.0 518.4 285.2 520.0" stroke="#7d7777" stroke-opacity="0.35" stroke-width="0.6"/>
<path d="M278.9 532.3Q280.6 533.3 283.8 532.9" stroke="#7d7777" stroke-opacity="0.35" stroke-width="0.6"/>
<path d="M299.7 506.7Q302.6 508.0 307.0 507.9" stroke="#7d7777" stroke-opacity="0.37" stroke-width="0.6"/>
<path d="M279.6 532.0Q281.6 532.9 284.8 532.7" stroke="#7d7777" stroke-opacity="0.32" stroke-width="0.6"/>
<path d="M298.1 521.2Q299.8 524.3 304.0 524.8" stroke="#7d7777" stroke-opacity="0.42" stroke-width="0.6"/>
<path d="M277.4 500.7Q281.4 502.4 286.1 503.3" stroke="#7d7777" stroke-opacity="0.33" stroke-width="0.6"/>
<path d="M284.1 496.1Q287.0 498.7 290.9 500.3" stroke="#7d7777" stroke-opacity="0.43" stroke-width="0.6"/>
<path d="M283.6 503.6Q287.1 505.3 290.8 506.8" stroke="#7d7777" stroke-opacity="0.44" stroke-width="0.6"/>
<path d="M281.8 534.4Q287.0 533.5 289.5 535.2" stroke="#7d7777" stroke-opacity="0.29" stroke-width="0.6"/>
<path d="M274.3 521.0Q278.8 521.8 280.6 525.4" stroke="#7d7777" stroke-opacity="0.35" stroke-width="0.6"/>
<path d="M282.6 496.7Q285.6 498.8 291.2 498.4" stroke="#7d7777" stroke-opacity="0.28" stroke-width="0.6"/>
<path d="M202.9 476.8Q203.5 478.0 206.5 476.9" stroke="#8a8484" stroke-opacity="0.32" stroke-width="0.6"/>
<path d="M211.7 506.1Q215.3 505.6 216.2 507.8" stroke="#8a8484" stroke-opacity="0.23" stroke-width="0.6"/>
<path d="M195.9 478.3Q200.0 477.2 201.5 478.6" stroke="#8a8484" stroke-opacity="0.32" stroke-width="0.6"/>
<path d="M193.7 492.7Q196.6 492.3 197.7 493.6" stroke="#8a8484" stroke-opacity="0.41" stroke-width="0.6"/>
<path d="M208.0 508.0Q209.1 509.9 212.2 509.9" stroke="#8a8484" stroke-opacity="0.41" stroke-width="0.6"/>
<path d="M222.8 497.5Q223.6 498.2 226.4 497.0" stroke="#8a8484" stroke-opacity="0.36" stroke-width="0.6"/>
<path d="M195.3 475.2Q198.2 475.1 201.1 475.1" stroke="#8a8484" stroke-opacity="0.35" stroke-width="0.6"/>
<path d="M208.3 484.9Q208.9 486.0 212.3 484.3" stroke="#8a8484" stroke-opacity="0.26" stroke-width="0.6"/>
<path d="M215.1 495.0Q217.2 496.0 220.3 495.8" stroke="#8a8484" stroke-opacity="0.28" stroke-width="0.6"/>
<path d="M228.0 507.4Q230.3 507.8 232.9 508.0" stroke="#8a8484" stroke-opacity="0.28" stroke-width="0.6"/>
<path d="M229.2 486.2Q233.0 486.4 234.5 488.9" stroke="#8a8484" stroke-opacity="0.24" stroke-width="0.6"/>
<path d="M200.0 483.3Q202.1 483.7 203.7 484.5" stroke="#8a8484" stroke-opacity="0.24" stroke-width="0.6"/>
<path d="M201.6 505.9Q204.7 506.4 207.7 507.0" stroke="#8a8484" stroke-opacity="0.29" stroke-width="0.6"/>
<path d="M198.7 506.7Q199.7 508.5 203.1 507.9" stroke="#8a8484" stroke-opacity="0.31" stroke-width="0.6"/>
<path d="M209.4 510.2Q211.0 511.4 212.9 512.2" stroke="#8a8484" stroke-opacity="0.23" stroke-width="0.6"/>
<path d="M223.7 486.5Q225.7 488.3 229.1 488.7" stroke="#8a8484" stroke-opacity="0.40" stroke-width="0.6"/>
<path d="M209.1 498.1Q212.2 498.7 215.3 499.4" stroke="#8a8484" stroke-opacity="0.31" stroke-width="0.6"/>
<path d="M210.3 493.9Q213.1 492.9 214.0 493.8" stroke="#8a8484" stroke-opacity="0.38" stroke-width="0.6"/>
<path d="M218.1 519.3Q221.8 519.3 223.7 521.2" stroke="#8a8484" stroke-opacity="0.25" stroke-width="0.6"/>
<path d="M224.0 491.6Q225.7 493.0 230.2 491.6" stroke="#8a8484" stroke-opacity="0.32" stroke-width="0.6"/>
<path d="M201.5 519.2Q205.8 518.6 207.5 520.7" stroke="#8a8484" stroke-opacity="0.35" stroke-width="0.6"/>
<path d="M227.1 492.1Q230.6 491.2 232.5 491.9" stroke="#8a8484" stroke-opacity="0.42" stroke-width="0.6"/>
<path d="M216.4 480.7Q219.0 480.2 219.4 481.8" stroke="#8a8484" stroke-opacity="0.37" stroke-width="0.6"/>
<path d="M222.6 524.0Q226.1 524.3 228.8 525.4" stroke="#8a8484" stroke-opacity="0.31" stroke-width="0.6"/>
<path d="M204.7 494.8Q207.3 493.6 208.2 494.2" stroke="#8a8484" stroke-opacity="0.26" stroke-width="0.6"/>
<path d="M217.1 518.2Q218.8 519.5 221.7 519.7" stroke="#8a8484" stroke-opacity="0.27" stroke-width="0.6"/>
<path d="M229.5 489.6Q233.1 489.5 234.0 492.1" stroke="#8a8484" stroke-opacity="0.37" stroke-width="0.6"/>
<path d="M201.7 489.8Q202.6 491.6 206.3 490.6" stroke="#8a8484" stroke-opacity="0.39" stroke-width="0.6"/>
<path d="M211.9 500.8Q212.8 502.3 215.5 502.1" stroke="#8a8484" stroke-opacity="0.33" stroke-width="0.6"/>
<path d="M198.0 493.2Q199.1 493.4 201.2 492.8" stroke="#8a8484" stroke-opacity="0.32" stroke-width="0.6"/>
<path d="M231.4 510.8Q232.8 511.9 235.7 511.4" stroke="#8a8484" stroke-opacity="0.31" stroke-width="0.6"/>
<path d="M206.5 512.9Q209.2 513.3 211.1 514.6" stroke="#8a8484" stroke-opacity="0.41" stroke-width="0.6"/>
<path d="M228.1 487.9Q231.4 488.5 234.5 489.2" stroke="#8a8484" stroke-opacity="0.25" stroke-width="0.6"/>
<path d="M222.3 477.5Q224.1 478.0 227.2 477.1" stroke="#8a8484" stroke-opacity="0.36" stroke-width="0.6"/>
<path d="M220.4 491.6Q223.5 491.9 225.3 493.4" stroke="#8a8484" stroke-opacity="0.31" stroke-width="0.6"/>
<path d="M205.6 479.7Q209.9 479.0 211.9 480.7" stroke="#8a8484" stroke-opacity="0.22" stroke-width="0.6"/>
<path d="M219.1 499.6Q221.6 499.2 223.6 499.2" stroke="#8a8484" stroke-opacity="0.37" stroke-width="0.6"/>
<path d="M204.9 510.9Q206.0 513.0 209.8 512.4" stroke="#8a8484" stroke-opacity="0.36" stroke-width="0.6"/>
<path d="M192.7 476.9Q192.9 478.5 195.7 477.4" stroke="#8a8484" stroke-opacity="0.29" stroke-width="0.6"/>
<path d="M207.9 478.7Q210.5 480.2 213.1 481.5" stroke="#8a8484" stroke-opacity="0.33" stroke-width="0.6"/>
<path d="M209.4 497.5Q211.7 498.5 215.5 498.1" stroke="#8a8484" stroke-opacity="0.38" stroke-width="0.6"/>
<path d="M219.7 499.8Q221.8 500.1 224.2 500.2" stroke="#8a8484" stroke-opacity="0.28" stroke-width="0.6"/>
<path d="M215.1 497.7Q217.8 498.0 220.8 498.0" stroke="#8a8484" stroke-opacity="0.31" stroke-width="0.6"/>
<path d="M227.2 500.1Q231.6 498.9 233.3 500.6" stroke="#8a8484" stroke-opacity="0.37" stroke-width="0.6"/>
<path d="M205.4 512.2Q207.9 512.3 209.2 513.6" stroke="#8a8484" stroke-opacity="0.41" stroke-width="0.6"/>
<path d="M275.6 565.2Q275.2 569.1 276.5 571.4" stroke="#3c3838" stroke-opacity="0.53" stroke-width="0.9"/>
<path d="M272.4 608.9Q271.6 613.6 273.7 615.4" stroke="#3c3838" stroke-opacity="0.42" stroke-width="0.9"/>
<path d="M278.9 508.3Q278.6 510.9 278.9 512.8" stroke="#3c3838" stroke-opacity="0.60" stroke-width="0.9"/>
<path d="M262.9 599.9Q265.1 601.7 265.3 605.5" stroke="#3c3838" stroke-opacity="0.55" stroke-width="0.9"/>
<path d="M269.4 553.8Q269.9 556.5 269.0 560.6" stroke="#3c3838" stroke-opacity="0.47" stroke-width="0.9"/>
<path d="M265.4 570.5Q267.0 572.0 265.7 576.4" stroke="#3c3838" stroke-opacity="0.34" stroke-width="0.9"/>
<path d="M279.6 516.0Q278.6 520.5 279.0 523.6" stroke="#3c3838" stroke-opacity="0.47" stroke-width="0.9"/>
<path d="M271.8 540.9Q273.9 542.6 273.7 546.8" stroke="#3c3838" stroke-opacity="0.50" stroke-width="0.9"/>
<path d="M266.2 585.6Q266.8 587.3 266.8 589.7" stroke="#3c3838" stroke-opacity="0.44" stroke-width="0.9"/>
<path d="M272.6 610.0Q272.3 614.2 272.9 617.6" stroke="#3c3838" stroke-opacity="0.53" stroke-width="0.9"/>
<path d="M261.1 513.1Q261.9 515.4 260.8 519.6" stroke="#3c3838" stroke-opacity="0.41" stroke-width="0.9"/>
<path d="M266.0 522.7Q265.7 524.9 266.2 526.4" stroke="#3c3838" stroke-opacity="0.50" stroke-width="0.9"/>
<path d="M263.5 514.2Q262.1 518.6 262.2 521.6" stroke="#3c3838" stroke-opacity="0.35" stroke-width="0.9"/>
<path d="M262.5 482.8Q261.4 486.8 261.7 489.4" stroke="#3c3838" stroke-opacity="0.45" stroke-width="0.9"/>
<path d="M264.6 570.7Q265.6 572.1 264.4 575.7" stroke="#3c3838" stroke-opacity="0.37" stroke-width="0.9"/>
<path d="M270.9 514.8Q271.5 518.0 271.8 521.7" stroke="#3c3838" stroke-opacity="0.48" stroke-width="0.9"/>
<path d="M263.5 557.8Q264.3 561.9 266.0 565.0" stroke="#3c3838" stroke-opacity="0.43" stroke-width="0.9"/>
<path d="M270.9 587.5Q269.2 591.7 269.6 593.9" stroke="#3c3838" stroke-opacity="0.41" stroke-width="0.9"/>
<path d="M278.0 500.9Q276.5 505.3 276.7 508.0" stroke="#3c3838" stroke-opacity="0.41" stroke-width="0.9"/>
<path d="M263.7 572.3Q263.6 576.6 266.2 578.3" stroke="#3c3838" stroke-opacity="0.55" stroke-width="0.9"/>
<path d="M272.4 554.5Q272.7 556.7 273.8 558.0" stroke="#3c3838" stroke-opacity="0.60" stroke-width="0.9"/>
<path d="M273.8 593.7Q273.2 597.0 275.4 597.4" stroke="#3c3838" stroke-opacity="0.51" stroke-width="0.9"/>
<path d="M263.7 509.2Q263.1 513.0 263.5 515.7" stroke="#3c3838" stroke-opacity="0.44" stroke-width="0.9"/>
<path d="M266.0 550.6Q265.8 553.9 267.0 555.7" stroke="#3c3838" stroke-opacity="0.39" stroke-width="0.9"/>
<path d="M266.6 555.5Q268.1 556.4 267.6 559.5" stroke="#3c3838" stroke-opacity="0.44" stroke-width="0.9"/>
<path d="M272.9 514.6Q272.7 517.6 271.7 521.3" stroke="#3c3838" stroke-opacity="0.50" stroke-width="0.9"/>
<path d="M276.6 542.0Q277.0 544.6 277.4 547.2" stroke="#3c3838" stroke-opacity="0.44" stroke-width="0.9"/>
<path d="M273.2 545.5Q271.9 550.0 272.3 552.8" stroke="#3c3838" stroke-opacity="0.31" stroke-width="0.9"/>
<path d="M279.2 559.3Q280.8 560.4 280.2 563.6" stroke="#3c3838" stroke-opacity="0.55" stroke-width="0.9"/>
<path d="M277.0 568.8Q276.5 571.8 276.5 574.3" stroke="#3c3838" stroke-opacity="0.47" stroke-width="0.9"/>
<path d="M261.6 506.0Q261.0 508.8 260.2 511.7" stroke="#3c3838" stroke-opacity="0.39" stroke-width="0.9"/>
<path d="M281.9 545.0Q282.9 545.4 280.9 548.8" stroke="#3c3838" stroke-opacity="0.30" stroke-width="0.9"/>
<path d="M262.9 526.9Q263.0 528.7 262.8 531.0" stroke="#3c3838" stroke-opacity="0.58" stroke-width="0.9"/>
<path d="M270.3 578.5Q269.3 582.5 270.4 584.5" stroke="#3c3838" stroke-opacity="0.44" stroke-width="0.9"/>
<path d="M264.5 534.5Q264.9 536.8 264.8 539.5" stroke="#3c3838" stroke-opacity="0.49" stroke-width="0.9"/>
<path d="M274.8 501.1Q275.6 504.7 277.4 507.4" stroke="#3c3838" stroke-opacity="0.59" stroke-width="0.9"/>
<path d="M276.0 507.7Q276.3 510.2 275.1 514.3" stroke="#3c3838" stroke-opacity="0.32" stroke-width="0.9"/>
<path d="M261.8 500.5Q262.6 502.5 263.5 504.4" stroke="#3c3838" stroke-opacity="0.59" stroke-width="0.9"/>
<path d="M267.7 508.4Q267.8 510.2 267.0 512.7" stroke="#3c3838" stroke-opacity="0.48" stroke-width="0.9"/>
<path d="M274.0 525.7Q274.3 527.3 273.3 530.3" stroke="#3c3838" stroke-opacity="0.36" stroke-width="0.9"/>
<path d="M271.2 608.2Q273.1 609.3 272.5 612.8" stroke="#3c3838" stroke-opacity="0.50" stroke-width="0.9"/>
<path d="M260.1 498.0Q261.7 499.3 261.4 502.6" stroke="#3c3838" stroke-opacity="0.51" stroke-width="0.9"/>
<path d="M275.5 525.2Q274.0 529.3 275.1 530.8" stroke="#3c3838" stroke-opacity="0.45" stroke-width="0.9"/>
<path d="M268.3 547.2Q270.4 547.4 269.7 550.6" stroke="#3c3838" stroke-opacity="0.41" stroke-width="0.9"/>
<path d="M267.5 491.2Q266.6 495.9 267.7 498.6" stroke="#3c3838" stroke-opacity="0.45" stroke-width="0.9"/>
<path d="M271.9 579.7Q271.1 582.9 272.1 584.3" stroke="#3c3838" stroke-opacity="0.52" stroke-width="0.9"/>
<path d="M259.5 497.2Q260.2 500.4 260.3 504.3" stroke="#3c3838" stroke-opacity="0.52" stroke-width="0.9"/>
<path d="M277.4 572.6Q277.7 576.9 280.2 579.1" stroke="#3c3838" stroke-opacity="0.35" stroke-width="0.9"/>
<path d="M260.4 475.4Q258.7 479.2 259.5 480.6" stroke="#3c3838" stroke-opacity="0.31" stroke-width="0.9"/>
<path d="M281.4 557.0Q279.8 560.0 280.6 560.7" stroke="#3c3838" stroke-opacity="0.39" stroke-width="0.9"/>
<path d="M263.0 486.8Q263.0 490.8 264.9 492.8" stroke="#3c3838" stroke-opacity="0.35" stroke-width="0.9"/>
<path d="M271.9 524.1Q272.9 526.9 273.9 529.8" stroke="#3c3838" stroke-opacity="0.42" stroke-width="0.9"/>
<path d="M274.6 499.5Q276.2 500.1 275.4 503.0" stroke="#3c3838" stroke-opacity="0.48" stroke-width="0.9"/>
<path d="M269.6 548.4Q268.8 550.8 268.7 552.4" stroke="#3c3838" stroke-opacity="0.51" stroke-width="0.9"/>
<path d="M269.0 571.8Q268.0 574.3 268.3 575.5" stroke="#3c3838" stroke-opacity="0.39" stroke-width="0.9"/>
<path d="M278.7 580.9Q277.6 585.5 278.3 588.3" stroke="#3c3838" stroke-opacity="0.42" stroke-width="0.9"/>
<path d="M277.7 593.1Q279.6 594.7 278.8 599.1" stroke="#3c3838" stroke-opacity="0.57" stroke-width="0.9"/>
<path d="M274.9 596.0Q274.5 599.0 273.1 602.9" stroke="#3c3838" stroke-opacity="0.59" stroke-width="0.9"/>
<path d="M262.6 528.8Q263.6 530.1 262.8 533.0" stroke="#3c3838" stroke-opacity="0.32" stroke-width="0.9"/>
<path d="M274.7 510.4Q274.4 514.4 276.0 516.4" stroke="#3c3838" stroke-opacity="0.43" stroke-width="0.9"/>
<path d="M265.9 523.4Q266.9 524.5 265.7 527.7" stroke="#3c3838" stroke-opacity="0.36" stroke-width="0.9"/>
<path d="M272.7 520.2Q272.0 523.4 274.2 523.5" stroke="#3c3838" stroke-opacity="0.40" stroke-width="0.9"/>
<path d="M266.2 611.8Q266.8 613.1 266.1 615.7" stroke="#3c3838" stroke-opacity="0.37" stroke-width="0.9"/>
<path d="M272.1 572.2Q271.3 576.1 270.9 579.6" stroke="#3c3838" stroke-opacity="0.40" stroke-width="0.9"/>
<path d="M269.6 515.3Q269.9 517.5 269.1 520.9" stroke="#3c3838" stroke-opacity="0.35" stroke-width="0.9"/>
<path d="M263.7 559.2Q264.0 561.2 264.9 562.7" stroke="#3c3838" stroke-opacity="0.35" stroke-width="0.9"/>
<path d="M278.1 550.9Q276.7 556.0 277.9 558.5" stroke="#3c3838" stroke-opacity="0.33" stroke-width="0.9"/>
<path d="M280.2 566.8Q280.1 570.8 280.6 574.0" stroke="#3c3838" stroke-opacity="0.33" stroke-width="0.9"/>
<path d="M263.1 480.9Q263.5 482.7 263.3 485.1" stroke="#3c3838" stroke-opacity="0.55" stroke-width="0.9"/>
<path d="M268.1 487.6Q269.1 489.8 267.8 494.3" stroke="#3c3838" stroke-opacity="0.47" stroke-width="0.9"/>
<path d="M215.4 512.3Q239.5 509.5 263.5 512.8" stroke="#6a6464" stroke-opacity="0.45" stroke-width=".8"/>
<path d="M216.6 516.5Q240.1 514.1 263.5 515.8" stroke="#6a6464" stroke-opacity="0.52" stroke-width=".8"/>
<path d="M216.4 521.2Q240.2 518.7 264.0 521.2" stroke="#6a6464" stroke-opacity="0.37" stroke-width=".8"/>
<path d="M217.0 526.1Q240.8 523.3 264.5 526.6" stroke="#6a6464" stroke-opacity="0.63" stroke-width=".8"/>
<path d="M218.2 530.4Q241.4 527.9 264.7 530.9" stroke="#6a6464" stroke-opacity="0.49" stroke-width=".8"/>
<path d="M220.2 534.8Q242.8 532.5 265.3 535.0" stroke="#6a6464" stroke-opacity="0.48" stroke-width=".8"/>
<path d="M221.2 539.4Q243.1 537.1 264.9 538.9" stroke="#6a6464" stroke-opacity="0.59" stroke-width=".8"/>
<path d="M220.4 544.1Q243.0 541.7 265.6 544.4" stroke="#6a6464" stroke-opacity="0.62" stroke-width=".8"/>
<path d="M221.8 548.6Q244.1 546.3 266.4 549.4" stroke="#6a6464" stroke-opacity="0.42" stroke-width=".8"/>
<path d="M221.7 553.4Q244.9 550.9 268.1 552.8" stroke="#6a6464" stroke-opacity="0.40" stroke-width=".8"/>
<path d="M224.3 557.3Q246.3 555.5 268.3 558.3" stroke="#6a6464" stroke-opacity="0.42" stroke-width=".8"/>
<path d="M224.3 561.9Q246.4 560.1 268.5 563.3" stroke="#6a6464" stroke-opacity="0.47" stroke-width=".8"/>
<path d="M224.5 566.6Q246.9 564.7 269.4 566.5" stroke="#6a6464" stroke-opacity="0.58" stroke-width=".8"/>
<path d="M226.0 572.3Q248.1 569.3 270.1 571.3" stroke="#6a6464" stroke-opacity="0.37" stroke-width=".8"/>
<path d="M227.1 576.1Q248.4 573.9 269.8 577.1" stroke="#6a6464" stroke-opacity="0.42" stroke-width=".8"/>
<path d="M228.0 581.7Q248.7 578.5 269.5 581.7" stroke="#6a6464" stroke-opacity="0.57" stroke-width=".8"/>
<path d="M228.1 586.2Q249.7 583.1 271.3 586.1" stroke="#6a6464" stroke-opacity="0.36" stroke-width=".8"/>
<path d="M229.3 590.3Q250.0 587.7 270.7 590.9" stroke="#6a6464" stroke-opacity="0.65" stroke-width=".8"/>
<path d="M229.7 594.5Q250.8 592.3 272.0 594.3" stroke="#6a6464" stroke-opacity="0.61" stroke-width=".8"/>
<path d="M231.5 599.3Q251.8 596.9 272.1 599.7" stroke="#6a6464" stroke-opacity="0.60" stroke-width=".8"/>
<path d="M231.7 603.4Q251.9 601.5 272.1 603.5" stroke="#6a6464" stroke-opacity="0.64" stroke-width=".8"/>
<path d="M232.6 608.4Q253.2 606.1 273.7 608.4" stroke="#6a6464" stroke-opacity="0.41" stroke-width=".8"/>
</g>
  <g fill="none" stroke-linecap="round" filter="url(#bl05)">
   <path d="M180 433Q202 419 234 421" stroke="#9d9797" stroke-width="1.1"/>
   <path d="M154 424Q162 414 172 415Q181 418 178 432Q175 450 180 470L187 488" stroke="#7d7777" stroke-width="1.5"/>
   <path d="M262 424Q288 444 302 480L312 512" stroke="#a39d9d" stroke-width="1"/>
   <path d="M275 536Q295 540 312 528" stroke="#a39d9d" stroke-width="1"/>
   
   <path d="M215 553L197 614" stroke="#f0eded" stroke-width="5"/>
   <path d="M212 553L194 614M219 555L202 614" stroke="#9d9797" stroke-width="1"/>
   <path d="M265 537L292 553" stroke="#efecec" stroke-width="5.5"/>
   <path d="M265 534L294 550M264 541L290 556" stroke="#9d9797" stroke-width="1"/>
   <path d="M155 590Q180 585 198 600M160 600Q175 598 190 612M158 450L170 470M156 458L166 474" stroke="#bdb7b7" stroke-width="1"/>
  </g>
  
  <ellipse cx="197" cy="503" rx="3" ry="1.8" fill="#3a3535" filter="url(#bl05)"/>
  <ellipse cx="252.5" cy="488.5" rx="2" ry="3" fill="#4a4545" filter="url(#bl05)"/>
 </g>
 <!-- photo -->
 <g clip-path="url(#phc)">
  <rect x="323" y="560" width="141" height="55" fill="#1b8cb9"/>
  <rect x="323" y="560" width="3" height="55" fill="#147aa3"/>
  <rect x="333" y="560" width="9" height="55" fill="#1d93c2"/>
  <rect x="346" y="560" width="2" height="55" fill="#1680aa"/>
  <rect x="420" y="585" width="40" height="22" fill="#1d94c4"/>
  <rect x="436" y="560" width="2" height="55" fill="#1782ad"/>
  <path d="M355 560H363L362.5 615H355.5Z" fill="#c6977f"/>
  <path d="M363 560H398L404 615H363Z" fill="#1f7a8f"/>
  <path d="M393 560H408L410 615H396Z" fill="#1c5a6c"/>
  <path d="M412 560L421 560Q418 585 398 595L384 601Q376 606 371 602Q367 597 374 593L392 590Q406 582 412 560Z" fill="#c38d77"/>
  <path d="M393 590.5L399 589L401 596L395 597Z" fill="#5d6a6d"/>
 </g>
</svg>
<!-- stamp -->
<svg style="left:0;top:0" width="1024" height="615" viewBox="0 0 1024 615">
 <g fill="none" stroke="#d8343c" opacity=".92">
  <path d="M600 380.6H800A55.35 55.35 0 0 1 800 491.3H600" stroke-width="4.5"/>
  <path d="M600 374.6H800.4A61.2 61.2 0 0 1 800.4 497H600" stroke-width="1.1"/>
  <circle cx="838.8" cy="436" r="5" fill="#d8343c" stroke="none"/>
  <path d="M736 459.5H744.5V471.5H736ZM736 465.5H744.5" stroke-width="1.4"/>
 </g>
 <g opacity=".92" fill="#d8343c" stroke="#d8343c" font-family="Liberation Sans" font-weight="bold">
  <text transform="translate(708.6 428.2) scale(.765 1)" font-size="43.5" stroke-width="1.7">ERT</text>
  <text transform="translate(711.5 471.4) scale(1 1)" font-size="17.5" stroke-width=".8" text-anchor="start">26</text>
  <text transform="translate(753.5 471.4) scale(.93 1)" font-size="17.5" stroke-width=".8">11:47</text>
 </g>
 <path d="M600 370H866V502.4H600" fill="none" stroke="#b3a5d6" stroke-width="1" stroke-dasharray="5 4"/>
 <g fill="#c3a2f5">
  <rect x="862.5" y="366.5" width="7" height="7"/>
  <rect x="862.5" y="432.5" width="7" height="7"/>
  <rect x="862.5" y="499" width="7" height="7"/>
 </g>
</svg>

</div>


<!-- ============ SIDEBAR ICONS ============ -->
<svg style="left:0;top:0" width="1024" height="615" viewBox="0 0 1024 615">
 <!-- left notch + dot -->
 <path d="M11 102C14 105.5 17.5 107.5 17.5 113C17.5 118.5 14 120.5 11 124Z" fill="#343434"/>
 <circle cx="10" cy="113" r="2.3" fill="#aa9cec"/>
 <!-- bg squares -->
 <rect x="28" y="45" width="24" height="23.5" rx="4" fill="#dfdfdf"/>
 <rect x="28" y="101" width="23.5" height="23.5" rx="4" fill="#fcdc3f"/>
 <rect x="28" y="141" width="24" height="23.5" rx="4" fill="#e3e3e3"/>
 <rect x="28" y="180" width="24" height="23" rx="4" fill="#e8e8e8"/>
 <rect x="28" y="219" width="24" height="24" rx="4" fill="#e4e4e4"/>
 <rect x="28" y="274" width="24" height="24" rx="4" fill="#e2e2e2"/>
 <rect x="28" y="314" width="24" height="22" rx="4" fill="#e2e2e2"/>
 <rect x="28" y="353" width="24" height="23" rx="4" fill="#e2e2e2"/>
 <!-- separators -->
 <path d="M33 85H45M33 258.7H45" stroke="#c6c6c6" stroke-width="1"/>
 <path d="M976 81.5H989M978 270.5H987" stroke="#c6c6c6" stroke-width="1"/>
 <g fill="none" stroke="#333" stroke-width="1.4" stroke-linejoin="round" stroke-linecap="round">
  <!-- 1 reader -->
  <path d="M31 50H48V63.5H40.5L39.5 64.5L38.5 63.5H31Z" fill="#fff"/>
  <path d="M39.5 50.5V63.5" stroke="#999" stroke-width="1"/>
  <path d="M33.8 53.8H37.5M33.8 56.6H37.5M33.8 59.4H37.5" stroke="#555" stroke-width="1.2"/>
  <path d="M43 50.5V55.5L44 54.7L45 55.5V50.5Z" fill="#333" stroke-width="1"/>
  <!-- 2 highlighter colorful -->
  <path d="M33.6 124V118.5L37 113.5H42.2L45.6 118.5V124" fill="#fff" stroke="#222" stroke-width="1.5"/>
  <path d="M37.2 113.6L42 107V113.6Z" fill="#222" stroke="#222" stroke-width="1.3"/>
  <path d="M34.4 119H44.8V124H34.4Z" fill="url(#rb)" stroke="none"/>
  <path d="M33.6 124V118.5M45.6 124V118.5" stroke="#222" stroke-width="1.5"/>
  <!-- 3 edit -->
  <path d="M32 163V148.5H42.5" fill="#fff"/>
  <path d="M32 148.5H44V163H32Z" fill="#fff"/>
  <path d="M35 153.5H38.5M35 156.5H38.5M35 159.5H38.5" stroke-width="1.3"/>
  <path d="M46 146.5L42 157" stroke-width="2.6" stroke-linecap="butt"/>
  <path d="M41.2 157L41.5 159.5L43 157.8Z" fill="#333" stroke-width="1"/>
  <!-- 4 two-pane -->
  <path d="M31 184.5H47V199H31Z" fill="#fff"/>
  <path d="M41.5 184.5V199" />
  <path d="M41.5 185H46.5V198.5H41.5Z" fill="#e2e2e2" stroke="none"/>
  <path d="M31 184.5H47V199H31ZM41.5 184.5V199"/>
  <path d="M34 188.5H38.5M34 191.5H38.5M34 194.5H38.5" stroke-width="1.3"/>
  <path d="M44 188.5V189.5M44 193V194" stroke-width="1.6"/>
  <!-- 5 form -->
  <path d="M32 226.5H44V242H32Z" fill="#fff"/>
  <path d="M35 234.5H38.5M35 238H43" stroke-width="2"/>
  <path d="M46 222.5L42 233" stroke-width="2.6" stroke-linecap="butt"/>
  <path d="M41.2 233L41.5 235.5L43 233.8Z" fill="#333" stroke-width="1"/>
  <!-- 6 pages -->
  <path d="M35.5 283V280.5H42L46.5 285V297.5H44" fill="#fff"/>
  <path d="M32.5 284H39.5L44 288.5V298.5H32.5Z" fill="#fff"/>
  <path d="M35 290H36M35 293H36M35 296H36" stroke-width="1.5"/>
  <!-- 7 crop -->
  <path d="M34 317V332H47.5M31 321H45.5V335" stroke="#333" stroke-width="3.4" stroke-linecap="butt" stroke-linejoin="miter"/>
  <path d="M34 318V332H46.5M32 321H45.5V334" stroke="#f4f4f4" stroke-width="1" stroke-linecap="butt" stroke-linejoin="miter"/>
  <!-- 8 overlay -->
  <path d="M35.5 356.5H47.5V368.5H44" fill="#f2f2f2"/>
  <path d="M31.5 360.5H44V373H31.5Z" fill="#fff"/>
  <path d="M35 367L38 364M37 370L40.5 366.5" stroke-width="1.4"/>
  <!-- bottom: layers -->
  <path d="M39.5 509L47 513L39.5 517L32 513Z" stroke="#444" stroke-width="1.2"/>
  <path d="M32 516L39.5 520L47 516M32 519L39.5 523L47 519" stroke="#444" stroke-width="1.2"/>
  <!-- bookmark -->
  <path d="M34.5 548.5H45V562L39.7 557.5L34.5 562Z" stroke="#444" stroke-width="1.4"/>
  <!-- paperclip -->
  <path d="M44.5 592L38 598.5Q35.5 601 33.5 599Q31.5 597 34 594.5L42 586.5Q44 584.5 46 586.5Q47.5 588.5 46 590L39 597Q38 598 37 597Q36 596 37 595L43 589" stroke="#444" stroke-width="1.3"/>
  <!-- right: search -->
  <circle cx="982.5" cy="55.5" r="6" stroke="#333" stroke-width="1.4"/>
  <path d="M987 60L991 64.5" stroke="#333" stroke-width="2.3"/>
  <path d="M979.5 53.5V56" stroke="#333" stroke-width="1.1"/>
  <!-- OCR -->
  <path d="M975.5 101.5V98.5Q975.5 96.5 977.5 96.5H988Q990 96.5 990 98.5V101.5" stroke-width="1.3"/>
  <path d="M973.2 101.8H992" stroke-width="1.3"/>
  <path d="M975.5 104V112.5H990V104" stroke-width="1.3"/>
  <!-- convert -->
  <path d="M976 133Q976 131.8 977.2 131.8H984L989 136.8V148.3Q989 149.5 987.8 149.5H977.2Q976 149.5 976 148.3Z" stroke-width="1.3"/>
  <path d="M980 141A3 3 0 0 1 985.5 139.5M985.2 142.5A3 3 0 0 1 979.7 144" stroke-width="1.3"/>
  <path d="M985.6 138.2V140H983.8M979.6 145.3V143.5H981.4" stroke-width="1"/>
  <!-- protect -->
  <path d="M982 184.5H977.2Q976 184.5 976 183.3V168Q976 166.8 977.2 166.8H984L989 171.8V176" stroke-width="1.3"/>
  <path d="M983.3 178.5H991V185H983.3Z" stroke-width="1.3"/>
  <path d="M985 178.5V176.5Q987.1 174 989.2 176.5V178.5" stroke-width="1.2"/>
  <!-- share -->
  <path d="M979 209.5H976V219.8H990V209.5H987" stroke-width="1.3"/>
  <path d="M983 214V204.2M979.7 207.3L983 204L986.3 207.3" stroke-width="1.3"/>
  <!-- mail -->
  <path d="M974.8 240.5H989.6V253H974.8Z" stroke-width="1.3" rx="1"/>
  <path d="M975.5 242L982.2 247.2L989 242" stroke-width="1.3"/>
  <!-- save -->
  <path d="M975.5 287H988.5V300.5H975.5Z" stroke-width="1.3"/>
  <path d="M979 287V289H985V287" stroke-width="1.1"/>
  <circle cx="982" cy="295" r="2.2" stroke-width="1.3"/>
  <!-- chat -->
  <path d="M975.5 586.5H990V597.5H985L982.7 600.5L980.4 597.5H975.5Z" stroke="#444" stroke-width="1.3"/>
  <path d="M978.5 589.7H987M978.5 592.3H987M978.5 594.9H984" stroke="#444" stroke-width="1.1"/>
 </g>
 <text x="977" y="110.5" font-family="Liberation Sans" font-weight="bold" font-size="6" fill="#333" letter-spacing="-.2">OCR</text>
 <!-- AI icon -->
 <g fill="none" stroke-width="2" stroke-linecap="round">
  <path d="M977.3 558.6A4.1 4.1 0 1 1 983 553.6" stroke="#a77ef2"/>
  <path d="M983 553.6A4.1 4.1 0 1 1 988.7 559" stroke="#86a8f6"/>
  <path d="M988.7 559A4.1 4.1 0 1 1 983 564.4" stroke="#4fcf8c"/>
  <path d="M983 564.4A4.1 4.1 0 1 1 977.3 558.6" stroke="#f5b748"/>
 </g>
 <defs>
  <linearGradient id="rb" x1="0" x2="1"><stop offset="0" stop-color="#f6a04a"/><stop offset=".3" stop-color="#6fd36a"/><stop offset=".6" stop-color="#4ab0f0"/><stop offset="1" stop-color="#b48ef0"/></linearGradient>
 </defs>
</svg>

<!-- ============ ICONS (screen coords) ============ -->
<svg style="left:0;top:0" width="1024" height="615" viewBox="0 0 1024 615">
 <g fill="none" stroke="#4a4a4a" stroke-width="1.4" stroke-linejoin="round" stroke-linecap="round">
  <!-- toolbar: comment -->
  <path d="M174.5 51.5H190.5V64.5H185.5L182.5 67.5L179.5 64.5H174.5Z" fill="#e4e4e4" stroke="#555"/>
  <path d="M177.5 54.7H187M177.5 57.7H187M177.5 60.7H183" stroke="#666" stroke-width="1.2"/>
  <!-- separator -->
  <path d="M209.8 49V63.5" stroke="#d8d8d8" stroke-width="1"/>
  <!-- highlighter -->
  <path d="M230.6 67V61.5L234.2 55.8H239.6L243 61.5V67" fill="#fff" stroke="#333" stroke-width="1.3"/>
  <path d="M231.2 62.3H242.4V67H231.2Z" fill="#c6c6c6" stroke="none"/>
  <path d="M234.6 55.8L235.6 51.8L239.2 50.2L239.6 55.8Z" fill="#2a2a2a" stroke="#2a2a2a" stroke-width="1"/>
  <path d="M230.6 67V61.5M243 67V61.5" stroke="#333" stroke-width="1.3"/>
  <!-- strikethrough -->
  <path d="M266.7 58H282" stroke="#555" stroke-width="1.2"/>
  <!-- U underline -->
  <path d="M304 66.6H316" stroke="#333" stroke-width="1.3"/>
  <!-- pin -->
  <path d="M723 56.6Q729 56 730.5 50.8L736.1 56.3Q731 58 730.2 63.6Z" stroke="#333" stroke-width="1.3"/>
  <path d="M725.6 59.4L721.6 65.2L727.8 61.4" stroke="#333" stroke-width="1.2"/>
  <path d="M740.7 56.5H745.7L743.2 59.8Z" fill="#333" stroke="#333" stroke-width=".6"/>
  <!-- stamp -->
  <circle cx="777.7" cy="54.6" r="3.4" stroke="#333" stroke-width="1.3"/>
  <path d="M777.7 58V60" stroke="#333"/>
  <path d="M771 66V61.5Q771 60 772.5 60H783Q784.5 60 784.5 61.5V66Z" fill="#fff" stroke="#333" stroke-width="1.3"/>
  <path d="M771 65.2H784.5" stroke="#333" stroke-width="1.8"/>
  <path d="M772.5 62.3H783" stroke="#bbb" stroke-width="1"/>
  <path d="M792.2 56.5H797.2L794.7 59.8Z" fill="#333" stroke="#333" stroke-width=".6"/>
  <!-- pen nib -->
  <path d="M827.3 50L823.3 55.5Q822.8 57.5 824.5 59.5L825 60.5H829.6L830.1 59.5Q831.8 57.5 831.3 55.5Z" fill="#2a2a2a" stroke="#2a2a2a" stroke-width="1"/>
  <path d="M827.3 50.5V55.5" stroke="#f5f5f5" stroke-width=".9"/>
  <circle cx="827.3" cy="56.6" r="1" fill="#f5f5f5" stroke="none"/>
  <path d="M821.3 66.5Q821.5 61.8 825 61.2H829.6Q833.1 61.8 833.4 66.5" fill="#fff" stroke="#333" stroke-width="1.3"/>
  <path d="M822.5 64.6H832.3" stroke="#c4c4c4" stroke-width="1.4"/>
  <path d="M842.2 56.3H847.2L844.7 59.6Z" fill="#333" stroke="#333" stroke-width=".6"/>
 </g>
 <!-- S glyph -->
 <text x="268.6" y="66" font-family="Liberation Serif" font-size="21.5" fill="#2e2e2e" stroke="#2e2e2e" stroke-width=".5">S</text>
 <text x="304.5" y="64.5" font-family="Liberation Serif" font-weight="bold" font-size="18" fill="#333">U</text>
</svg>


<!-- ============ BOTTOM TOOLBAR (behind dialog) ============ -->
<div class="a" style="left:312px;top:548px;width:398px;height:33px;background:#fbfbfb;border-radius:4px;box-shadow:0 1px 4px rgba(0,0,0,.16)">
 <svg style="left:0;top:0" width="398" height="33" viewBox="312 548 398 33"><g transform="translate(0 -2)">
  <g fill="none" stroke="#444" stroke-width="1.3" stroke-linecap="round">
   <circle cx="330.5" cy="565.5" r="7"/>
   <circle cx="439.3" cy="565.5" r="7"/>
   <path d="M473.5 572L479 566.5L484.5 572M509 572L514.5 566.5L520 572M614 566L617.5 569.5L621 566M688 572L693.5 566.5L699 572"/>
   <path d="M648 571.5H658" stroke-width="1.6"/>
  </g>
  <circle cx="460" cy="570" r=".9" fill="#777"/><circle cx="672.5" cy="570" r=".9" fill="#777"/>
  <rect x="535" y="553" width="62" height="24" rx="3" fill="#fff" stroke="#e2e2e2" stroke-width="1"/>
  <text x="360" y="572" font-family="Liberation Sans" font-size="11.5" fill="#444">150%</text>
  <text x="553" y="572" font-family="Liberation Sans" font-size="11.5" fill="#444">3 / 3</text>
 </g></svg>
</div>

<!-- ============ DIALOG ============ -->
<div id="dlg">
  <div class="a" style="left:127px;top:28px;font-size:12px;font-weight:bold;color:#2a2a2a;white-space:nowrap;letter-spacing:-.38px;line-height:14px">Als flache Kopie speichern</div>
  <div class="card" style="top:60.5px">
    <div class="cb" style="top:17px"><svg style="left:3px;top:3px" width="8" height="8"><path d="M1 4.2L3.2 6.2L7 1.8" fill="none" stroke="#fff" stroke-width="1.3" stroke-linecap="round" stroke-linejoin="round"/></svg></div>
    <div class="ct" style="top:17.3px">Anmerkungen und Formulare red</div>
    <div class="cd" style="top:36px">Reduziere Anmerkungen und<br>Formularfelder, um das Verteilen von<br>Dateien zu erleichtern und zu verhindern,<br>dass andere Nutzer die Informationen<br>bearbeiten.</div>
    <div class="ill" style="top:29px;background:#3fd89b"><svg style="left:0;top:0" width="94" height="63" viewBox="569 135 94 63">
 <rect x="576.5" y="150.5" width="80" height="50" fill="#fff" stroke="#333" stroke-width="1.3"/>
 <path d="M615.8 151V200" stroke="#6a6a6a" stroke-width="1.2"/>
 <g fill="#8fdc1e"><rect x="580.3" y="158.6" width="8" height="2.6"/><rect x="580.3" y="163.5" width="8" height="2.6"/><rect x="580.3" y="168.4" width="8" height="2.6"/><rect x="580.3" y="173.2" width="8" height="2.6"/><rect x="580.3" y="178.1" width="8" height="2.6"/>
 <rect x="621.3" y="158.6" width="29.5" height="2.6"/><rect x="621.3" y="166" width="12" height="2.4"/>
 <path d="M636 165.8H650.6V176H645L643.3 178.2L641.6 176H636Z"/></g>
 <g fill="#e8e8e8"><rect x="591" y="158.6" width="20" height="2.6"/><rect x="591" y="163.5" width="20" height="2.6"/><rect x="591" y="168.4" width="20" height="2.6"/><rect x="591" y="173.2" width="20" height="2.6"/><rect x="591" y="178.1" width="20" height="2.6"/>
 <rect x="582" y="183.4" width="29" height="8.2"/><rect x="621.3" y="173" width="12" height="2"/><rect x="621.3" y="180.3" width="29" height="2"/><rect x="623" y="186.7" width="27" height="2"/></g>
 <path d="M638.5 168.5H648M638.5 171H648M638.5 173.5H645" stroke="#e8f8c8" stroke-width=".9"/>
</svg></div>
  </div>
  <div class="card" style="top:190px">
    <div class="cb" style="top:17px"><svg style="left:3px;top:3px" width="8" height="8"><path d="M1 4.2L3.2 6.2L7 1.8" fill="none" stroke="#fff" stroke-width="1.3" stroke-linecap="round" stroke-linejoin="round"/></svg></div>
    <div class="ct" style="top:17.3px">Wasserzeichen glätten</div>
    <div class="cd" style="top:36px">Verhindere das Löschen von<br>Wasserzeichen in deiner PDF-Datei durch<br>andere, indem du das Werkzeug zum<br>Entfernen von Wasserzeichen verwendest.</div>
    <div class="ill" style="top:28px;background:#a8dbf8"><svg style="left:0;top:0" width="94" height="63" viewBox="569 264.6 94 63">
 <rect x="580.5" y="286.6" width="71" height="50" rx="1.5" fill="#fff" stroke="#3d4a55" stroke-width="1.3"/>
 <g stroke="#eef0f2" stroke-width="2"><path d="M584 296H592M584 303H592M584 310H592M584 318H592M584 325H592M640 296H648M640 303H648M640 310H648M640 318H648M640 325H648"/></g>
 <path d="M592.8 327V281.2Q592.8 279.6 594.4 279.6H626.2L638.4 293.9V327" fill="#fff" stroke="#3d4a55" stroke-width="1.3"/>
 <path d="M626.2 279.6L638.4 293.9H626.2Z" fill="#333"/>
 <g stroke="#e8eaec" stroke-width="2"><path d="M600 287H624M600 295H634M600 303H634M600 310H634M600 318H634M600 325H634"/></g>
 <path d="M606 316L615 293L624 316M609 308.5H621" fill="none" stroke="#cfe6f7" stroke-width="1.8"/>
</svg></div>
  </div>
  <div class="card" style="top:319.5px">
    <div class="cb" style="top:17px"><svg style="left:3px;top:3px" width="8" height="8"><path d="M1 4.2L3.2 6.2L7 1.8" fill="none" stroke="#fff" stroke-width="1.3" stroke-linecap="round" stroke-linejoin="round"/></svg></div>
    <div class="ct" style="top:17.3px">Zugeschnittene Seiten glätten</div>
    <div class="cd" style="top:36px">Verwirf zugeschnittene Seitenbereiche und<br>verhindere, dass andere deine<br>zugeschnittenen Inhalte wiederherstellen<br>können.</div>
    <div class="ill" style="top:29px;background:#fde04a"><svg style="left:0;top:0" width="94" height="63" viewBox="569 394.6 94 63">
 <rect x="594" y="404.2" width="45.5" height="60" fill="#c6c6c6" stroke="#333" stroke-width="1.3"/>
 <rect x="594.6" y="404.8" width="29" height="39.4" fill="#fff"/>
 <g stroke="#e6e6e6" stroke-width="1.8"><path d="M600 414.8H622M600 423.5H622M600 431.5H622M600 439.5H622"/></g>
 <g stroke="#bbb" stroke-width="1.5"><path d="M625 414.8H636M625 423.5H636M625 431.5H636M625 439.5H636M596 450H636"/></g>
 <path d="M623.7 405V444.2H594.5" fill="none" stroke="#333" stroke-width="1" stroke-dasharray="1.6 1.6"/>
 <g fill="#2d2d2d"><rect x="605.3" y="403" width="6" height="2.5" rx="1.2"/><rect x="605.3" y="443" width="6" height="2.5" rx="1.2"/><rect x="592.8" y="421.2" width="2.5" height="6" rx="1.2"/><rect x="622.5" y="421.2" width="2.5" height="6" rx="1.2"/></g>
 <path d="M627.5 426.2V433.3L629.3 431.7L630.6 434.6L632 434L630.8 431.2L633.3 431Z" fill="#fff" stroke="#333" stroke-width=".9" stroke-linejoin="round"/>
</svg></div>
  </div>
  <div class="a" style="left:146px;top:462px;width:110px;height:30px;border-radius:3px;background:#c293f5;color:#f1e6fd;font-size:11.5px;line-height:32px;text-align:center">Speichern unter</div>
  <div class="a" style="left:264px;top:462px;width:110px;height:30px;border-radius:3px;background:#f6f6f6;border:1px solid #e0e0e0;color:#444;font-size:11.6px;line-height:30px;text-align:center">Abbrechen</div>
</div>
</body></html>
